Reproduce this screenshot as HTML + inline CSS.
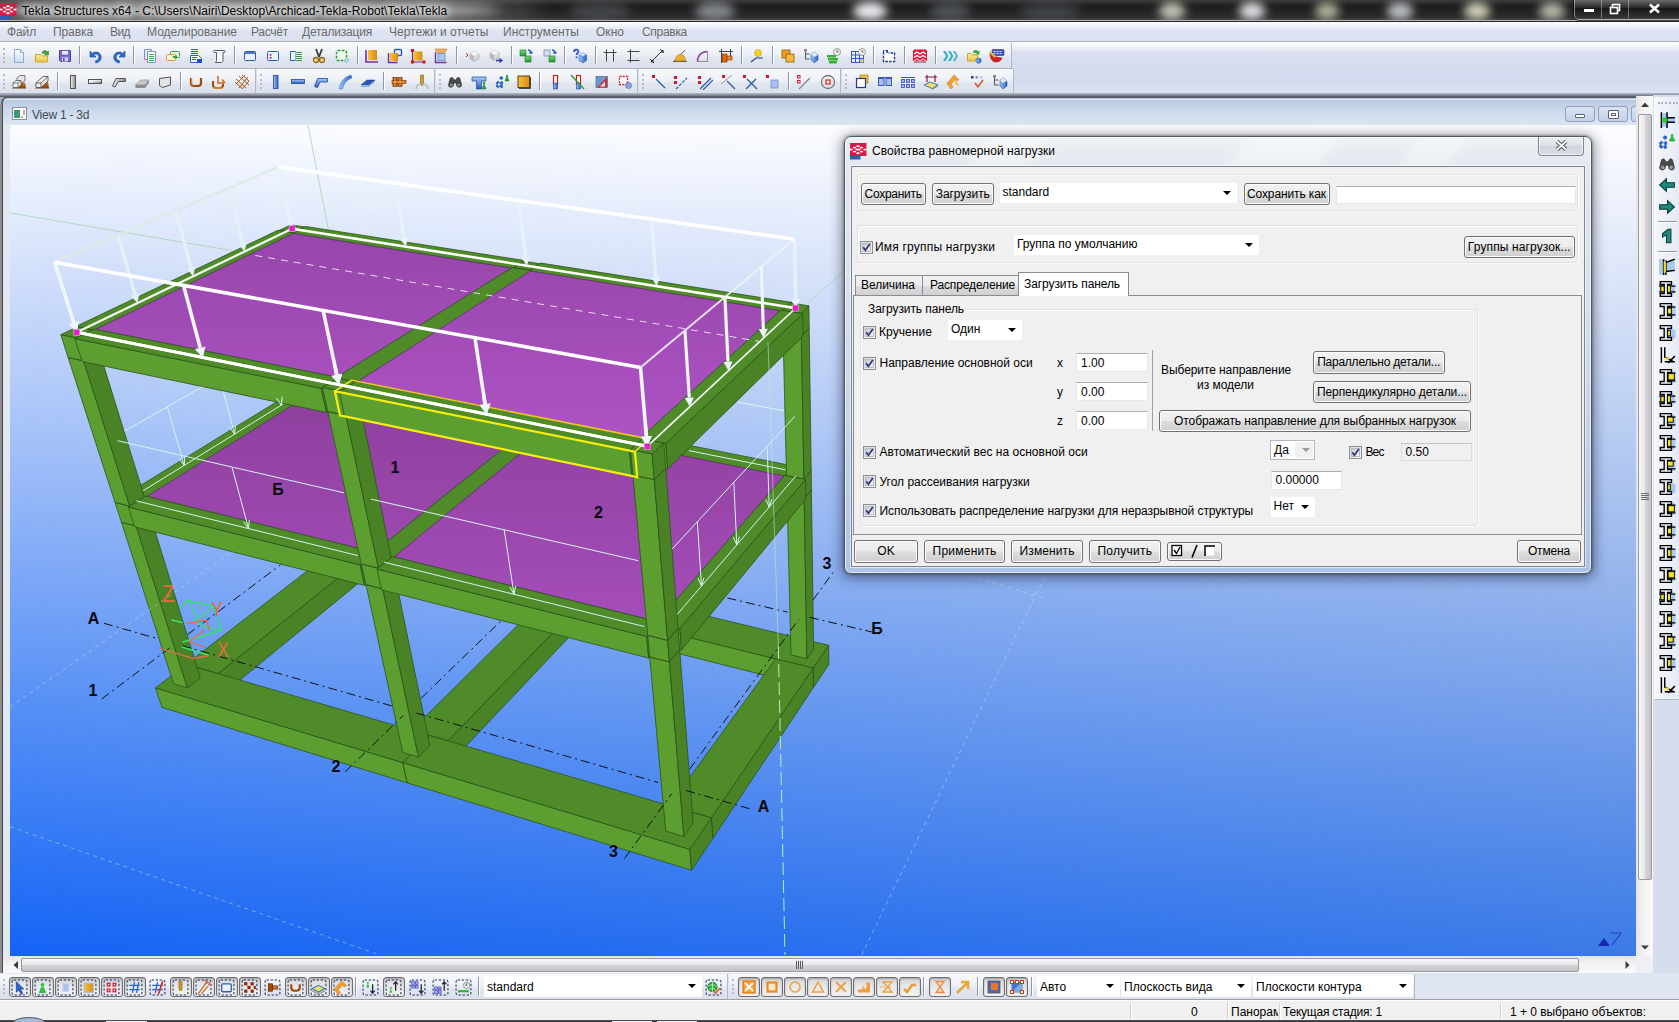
<!DOCTYPE html>
<html lang="ru"><head><meta charset="utf-8"><title>Tekla Structures</title>
<style>
html,body{margin:0;padding:0}
body{width:1679px;height:1022px;overflow:hidden;position:relative;background:#d3dcec;font-family:"Liberation Sans",sans-serif;font-size:12px;color:#000;line-height:14px}
.a{position:absolute}
.t{position:absolute;white-space:nowrap}
#title{left:0;top:0;width:1679px;height:22px;background:#262626;overflow:hidden}
#title .blob{position:absolute;border-radius:50%;filter:blur(5px)}
#menu{left:0;top:22px;width:1679px;height:19px;background:linear-gradient(#ffffff,#eff2fa 22%,#dfe4f3 45%,#dce1f1);border-bottom:1px solid #aeb2bc}
#menu span{position:absolute;top:4px;color:#6e6e6e;white-space:nowrap}
.tb{position:absolute;background:linear-gradient(#f8f9fc,#edf0f6 45%,#e0e5ef 60%,#dbe1ec);border-right:1px solid #aeb9cc;border-bottom:1px solid #b9c3d4}
.grip{position:absolute;width:2px;top:5px;bottom:5px;border-left:2px dotted #b4bccb}
.sep{position:absolute;width:1px;background:#8d97a8;box-shadow:1px 0 0 #fff}
.ic{position:absolute;width:16px;height:16px}
.btn{position:absolute;box-sizing:border-box;border:1px solid #707070;border-radius:3px;background:linear-gradient(#f2f2f2,#ebebeb 48%,#dddddd 52%,#cfcfcf);box-shadow:inset 0 0 0 1px #fcfcfc;text-align:center;white-space:nowrap;height:23px;line-height:20px;font-size:12px}
.inp{position:absolute;box-sizing:border-box;background:#fff;border:1px solid #e3e9ef;border-top-color:#abadb3;height:21px;line-height:18px;padding-left:4px;font-size:12px;white-space:nowrap}
.cmb{position:absolute;box-sizing:border-box;background:#fff;height:21px;line-height:18px;padding-left:3px;font-size:12px;white-space:nowrap}
.cmb:after{content:"";position:absolute;right:6px;top:8px;border:4px solid transparent;border-top:4px solid #000;border-bottom:0}
.cb{position:absolute;box-sizing:border-box;width:13px;height:13px;border:1px solid #8e8f8f;background:linear-gradient(135deg,#d9dadc,#f6f6f6)}
.cb:before{content:"";position:absolute;left:1px;top:1px;width:9px;height:9px;box-sizing:border-box;border:1px solid #b9bcc0;background:linear-gradient(135deg,#c8ccd2,#f4f4f5)}
.cb svg{position:absolute;left:1px;top:1px}
</style></head><body>
<svg width="0" height="0" style="position:absolute"><defs><linearGradient id="gOr" x1="0" y1="0" x2="1" y2="0"><stop offset="0" stop-color="#f6c23a"/><stop offset="1" stop-color="#d98a10"/></linearGradient><linearGradient id="gBl" x1="0" y1="0" x2="1" y2="0"><stop offset="0" stop-color="#9cc4f4"/><stop offset="1" stop-color="#2c62c8"/></linearGradient><linearGradient id="gBlv" x1="0" y1="0" x2="0" y2="1"><stop offset="0" stop-color="#a8ccf8"/><stop offset="1" stop-color="#2458c0"/></linearGradient><linearGradient id="gGy" x1="0" y1="0" x2="1" y2="0"><stop offset="0" stop-color="#f4f4f4"/><stop offset="1" stop-color="#8a8a8a"/></linearGradient><linearGradient id="gPg" x1="0" y1="0" x2="0" y2="1"><stop offset="0" stop-color="#ffffff"/><stop offset="1" stop-color="#c9daf3"/></linearGradient><linearGradient id="gYl" x1="0" y1="0" x2="0" y2="1"><stop offset="0" stop-color="#fff3a0"/><stop offset="1" stop-color="#e8c040"/></linearGradient><linearGradient id="gGn" x1="0" y1="0" x2="0" y2="1"><stop offset="0" stop-color="#7ed67e"/><stop offset="1" stop-color="#1e9a2e"/></linearGradient><linearGradient id="gBr" x1="0" y1="0" x2="0" y2="1"><stop offset="0" stop-color="#c87a28"/><stop offset="1" stop-color="#7a3c08"/></linearGradient><linearGradient id="gTeal" x1="0" y1="0" x2="0" y2="1"><stop offset="0" stop-color="#3aa89a"/><stop offset="1" stop-color="#0c5c58"/></linearGradient></defs></svg>
<div id="title" class="a">
<div class="a" style="left:0;top:0;width:1679px;height:21px;background:linear-gradient(#3c3c3c,#1d1d1d 30%,#2b2b2b 80%,#4a4a4a)"></div>
<div class="blob" style="left:-30px;top:0px;width:530px;height:20px;background:rgba(255,255,255,.6);filter:blur(6px)"></div>
<div class="blob" style="left:380px;top:1px;width:160px;height:18px;background:rgba(255,255,255,.22);filter:blur(9px)"></div>
<div class="blob" style="left:695px;top:2px;width:40px;height:18px;background:#cfd6e0;opacity:0.55"></div>
<div class="blob" style="left:853px;top:2px;width:34px;height:18px;background:#f4f6fa;opacity:0.95"></div>
<div class="blob" style="left:1159px;top:2px;width:26px;height:18px;background:#e8ecd8;opacity:0.8"></div>
<div class="blob" style="left:1239px;top:2px;width:26px;height:18px;background:#f0f2f6;opacity:0.9"></div>
<div class="blob" style="left:1315px;top:2px;width:24px;height:18px;background:#dcdcc0;opacity:0.75"></div>
<div class="blob" style="left:1387px;top:2px;width:26px;height:18px;background:#e0e4ec;opacity:0.8"></div>
<div class="blob" style="left:1464px;top:2px;width:26px;height:18px;background:#ececd0;opacity:0.85"></div>
<div class="blob" style="left:1539px;top:2px;width:26px;height:18px;background:#e0e4d0;opacity:0.75"></div>
<div class="blob" style="left:930px;top:2px;width:40px;height:18px;background:#8a93a0;opacity:0.4"></div>
<div class="blob" style="left:1020px;top:2px;width:60px;height:18px;background:#707884;opacity:0.35"></div>
<div class="blob" style="left:570px;top:2px;width:60px;height:18px;background:#70767e;opacity:0.4"></div>
<div class="a" style="left:0;top:20px;width:1679px;height:1px;background:#b4b4b6"></div><div class="a" style="left:0;top:21px;width:1679px;height:1px;background:#26262a"></div>
<svg class="a" style="left:0;top:3px" width="17" height="17" viewBox="0 0 17 17"><rect x="0" y="0" width="16.500" height="13" fill="#d81848"/><rect x="0" y="13" width="10.500" height="3.500" fill="#2c5cb4"/><g fill="#fff"><rect x="0" y="5.700" width="2.600" height="1.700"/><rect x="5.500" y="5.700" width="5" height="1.700"/><rect x="13.500" y="5.700" width="3" height="1.700"/><ellipse cx="8" cy="3.200" rx="1.800" ry="1"/><ellipse cx="4.500" cy="4.600" rx="1.600" ry=".9"/><ellipse cx="11.500" cy="4.600" rx="1.600" ry=".9"/><ellipse cx="4.500" cy="8.600" rx="1.600" ry=".9"/><ellipse cx="11.500" cy="8.600" rx="1.600" ry=".9"/><ellipse cx="8" cy="10.200" rx="1.800" ry="1"/></g></svg>
<span class="t" style="left:22px;top:4px;color:#000;letter-spacing:0.04px;text-shadow:0 0 6px #fff,0 0 10px #fff,0 0 14px #fff;">Tekla Structures x64 - C:\Users\Nairi\Desktop\Archicad-Tekla-Robot\Tekla\Tekla</span>
<div class="a" style="left:1574px;top:-3px;width:110px;height:21px;border:1px solid rgba(255,255,255,.45);border-radius:0 0 0 5px;background:linear-gradient(rgba(255,255,255,.28),rgba(255,255,255,.08) 45%,rgba(0,0,0,.25) 50%,rgba(90,90,90,.25));box-shadow:0 0 0 1px rgba(0,0,0,.6)"></div>
<div class="a" style="left:1601px;top:0;width:1px;height:18px;background:rgba(255,255,255,.35)"></div><div class="a" style="left:1628px;top:0;width:1px;height:18px;background:rgba(255,255,255,.35)"></div>
<div class="a" style="left:1584px;top:9px;width:10px;height:3px;background:#fff;box-shadow:0 0 1px #000"></div>
<svg class="a" style="left:1609px;top:3px" width="12" height="12"><rect x="3.500" y="1.500" width="7" height="6" fill="none" stroke="#fff" stroke-width="1.600"/><rect x="1.500" y="4.500" width="7" height="6" fill="#333" stroke="#fff" stroke-width="1.600"/></svg>
<svg class="a" style="left:1648px;top:3px" width="13" height="11"><path d="M2 1.500l9 8M11 1.500l-9 8" stroke="#fff" stroke-width="2.600"/></svg>
</div>
<div id="menu" class="a">
<span class="t" style="left:7px;top:3px;color:#6b6b6b;letter-spacing:-0.12px;">Файл</span>
<span class="t" style="left:53px;top:3px;color:#6b6b6b;letter-spacing:-0.09px;">Правка</span>
<span class="t" style="left:110px;top:3px;color:#6b6b6b;letter-spacing:-0.57px;">Вид</span>
<span class="t" style="left:147px;top:3px;color:#6b6b6b;letter-spacing:0.02px;">Моделирование</span>
<span class="t" style="left:251px;top:3px;color:#6b6b6b;letter-spacing:-0.26px;">Расчёт</span>
<span class="t" style="left:302px;top:3px;color:#6b6b6b;letter-spacing:-0.22px;">Детализация</span>
<span class="t" style="left:389px;top:3px;color:#6b6b6b;letter-spacing:-0.01px;">Чертежи и отчеты</span>
<span class="t" style="left:503px;top:3px;color:#6b6b6b;letter-spacing:0.11px;">Инструменты</span>
<span class="t" style="left:596px;top:3px;color:#6b6b6b;letter-spacing:0.03px;">Окно</span>
<span class="t" style="left:642px;top:3px;color:#6b6b6b;letter-spacing:-0.30px;">Справка</span>
</div>
<div class="a" style="left:0;top:42px;width:1679px;height:52px;background:linear-gradient(#f4f6fb 0,#ffffff 1px,#f2f4fb 5px,#d9dff0 11px,#d5dbee 40px,#dde2f2 100%)"></div>
<div class="tb" style="left:0px;top:43px;width:1011px;height:25px"><div class="grip" style="left:3px"></div></div>
<div class="a" style="left:0;top:68px;width:1013px;height:1px;background:#a9b3c5"></div>
<div class="tb" style="left:0px;top:69px;width:255px;height:25px"><div class="grip" style="left:3px"></div></div>
<div class="tb" style="left:257px;top:69px;width:177px;height:25px"><div class="grip" style="left:3px"></div></div>
<div class="tb" style="left:436px;top:69px;width:201px;height:25px"><div class="grip" style="left:3px"></div></div>
<div class="tb" style="left:639px;top:69px;width:201px;height:25px"><div class="grip" style="left:3px"></div></div>
<div class="tb" style="left:842px;top:69px;width:171px;height:25px"><div class="grip" style="left:3px"></div></div>
<svg class="ic" style="left:11px;top:48px" viewBox="0 0 16 16"><path d="M3.5 1.5h6l3 3v10h-9z" fill="url(#gPg)" stroke="#8fa8cf"/><path d="M9.5 1.5v3h3" fill="#e8f0fc" stroke="#8fa8cf"/></svg>
<svg class="ic" style="left:33.5px;top:48px" viewBox="0 0 16 16"><path d="M1.5 6.5h5l1 1.5h6v6h-12z" fill="url(#gYl)" stroke="#d0a830"/><path d="M8 5c1-3 4-3 5-1l1.5-1v4h-4l1.3-1.3c-1-1-2.5-.6-3 .3z" fill="#3aa83a" stroke="#1c7a1c" stroke-width=".5"/></svg>
<svg class="ic" style="left:56.5px;top:48px" viewBox="0 0 16 16"><path d="M2.5 2.5h11v11h-10l-1-1z" fill="#7b6fd0" stroke="#4a3f9e"/><rect x="4.5" y="2.5" width="7" height="4.5" fill="#ece8ff" stroke="#4a3f9e" stroke-width=".6"/><rect x="5" y="9.5" width="6" height="4" fill="#d8d4ee"/><rect x="6" y="10.3" width="1.6" height="2.6" fill="#4a3f9e"/></svg>
<div class="sep" style="left:79px;top:46px;height:18px"></div>
<svg class="ic" style="left:87.5px;top:48px" viewBox="0 0 16 16"><path d="M2 3v6h6l-2.2-2.2c2.2-1.6 5-.3 5 2.4 0 2-1.4 3.3-3.3 3.6l.3 2.2c3-.4 5.4-2.7 5.4-5.8 0-4.6-5.4-6.8-9-3.8z" fill="#2a6ad8" stroke="#1646a0" stroke-width=".6"/></svg>
<svg class="ic" style="left:111px;top:48px" viewBox="0 0 16 16"><path d="M14 3v6h-6l2.2-2.2c-2.2-1.6-5-.3-5 2.4 0 2 1.4 3.3 3.3 3.6l-.3 2.2c-3-.4-5.400-2.700-5.400-5.800 0-4.600 5.400-6.800 9-3.800z" fill="#2a6ad8" stroke="#1646a0" stroke-width=".6"/></svg>
<div class="sep" style="left:133px;top:46px;height:18px"></div>
<svg class="ic" style="left:141.5px;top:48px" viewBox="0 0 16 16"><path d="M2.500 1.500h7v10h-7z" fill="#e8eefc" stroke="#7890c0"/><path d="M5.500 3.500h8v11h-8z" fill="#fff" stroke="#7890c0"/><path d="M7 6.500h5M7 8.500h5M7 10.500h5M7 12.500h5" stroke="#22a022" stroke-width=".9"/></svg>
<svg class="ic" style="left:164.5px;top:48px" viewBox="0 0 16 16"><rect x="5.500" y="3.500" width="9" height="6" rx="1" fill="#e8f6e8" stroke="#3c9a3c"/><rect x="1.500" y="6.500" width="9" height="6" rx="1" fill="#fff4d8" stroke="#d8a030"/><path d="M11 9l3 0 0-2 2 3-2 3 0-2-3 0z" fill="#3c9a3c" transform="translate(-2,0) scale(.9)"/></svg>
<svg class="ic" style="left:187.5px;top:48px" viewBox="0 0 16 16"><path d="M3 1.500h7M3 3.500h7M3 5.500h7" stroke="#3060b0" stroke-width="1.200"/><path d="M2.500 7.500h8l3 3v4h-11z" fill="#fff" stroke="#3060b0"/><rect x="9" y="11" width="5" height="4" fill="#1c50c0"/><path d="M4 9.500h5M4 11.500h4" stroke="#3060b0"/></svg>
<svg class="ic" style="left:211px;top:48px" viewBox="0 0 16 16"><path d="M3.500 2.500h9.500c1.500 0 1.500 2 0 2h-1v8c0 1.500-1 2-2 2h-6c1 0 1.500-.8 1.500-2v-8h-2c-1.500 0-1.500-2 0-2z" fill="#f4f6fb" stroke="#56606e"/></svg>
<div class="sep" style="left:233.5px;top:46px;height:18px"></div>
<svg class="ic" style="left:241.5px;top:48px" viewBox="0 0 16 16"><rect x="2.500" y="3.500" width="11" height="9" rx="1" fill="#eaf2fd" stroke="#2a5cb8"/><path d="M2.500 5h11" stroke="#2a5cb8" stroke-width="1.600"/></svg>
<svg class="ic" style="left:265px;top:48px" viewBox="0 0 16 16"><rect x="2.500" y="3.500" width="11" height="9" rx="1" fill="#eaf2fd" stroke="#2a5cb8"/><rect x="4.500" y="6" width="2" height="1.600" fill="#c02080"/><rect x="4.500" y="9" width="2" height="1.600" fill="#c02080"/></svg>
<svg class="ic" style="left:288px;top:48px" viewBox="0 0 16 16"><path d="M2.500 3.500h5v9h-5z" fill="#eaf2fd" stroke="#2a5cb8"/><path d="M7.500 3.500h6v9h-6" fill="#f4faf4" stroke="none"/><path d="M8 4.500h6M8 6.500h6M8 8.500h6M8 10.500h6M8 12.500h6" stroke="#1e8a2e" stroke-width=".9"/></svg>
<svg class="ic" style="left:310.5px;top:48px" viewBox="0 0 16 16"><path d="M5 1l3 8M11 1l-3 8" stroke="#3a3a3a" stroke-width="1.800"/><circle cx="5" cy="12" r="2.500" fill="#f0d890" stroke="#8a6a18" stroke-width="1.300"/><circle cx="11" cy="12" r="2.500" fill="#f0d890" stroke="#8a6a18" stroke-width="1.300"/></svg>
<svg class="ic" style="left:333.5px;top:48px" viewBox="0 0 16 16"><rect x="2.500" y="2.500" width="10" height="10" rx="1.500" fill="#eaf6ea" stroke="#1e9a2e" stroke-width="1.400" stroke-dasharray="2.500 1.500"/><circle cx="12.500" cy="12.500" r="1.800" fill="#bfe0f4" stroke="#5aa0c8" stroke-width=".6"/></svg>
<div class="sep" style="left:356.5px;top:46px;height:18px"></div>
<svg class="ic" style="left:363.5px;top:48px" viewBox="0 0 16 16"><path d="M2 2v12h12" fill="none" stroke="#7a2aa0" stroke-width="1.600"/><rect x="4" y="2" width="9" height="10" fill="url(#gOr)"/></svg>
<svg class="ic" style="left:387px;top:48px" viewBox="0 0 16 16"><rect x="7.500" y="1.500" width="7" height="6" rx="1" fill="#eaf2fd" stroke="#2a5cb8" stroke-width="1.400"/><path d="M1.500 5v9.500h9" fill="none" stroke="#7a2aa0" stroke-width="1.400"/><rect x="3" y="5" width="8" height="8" fill="url(#gOr)"/></svg>
<svg class="ic" style="left:410px;top:48px" viewBox="0 0 16 16"><rect x="3.500" y="3.500" width="9" height="9" fill="url(#gOr)"/><path d="M2.500 2v12h12" fill="none" stroke="#7a2aa0" stroke-width="1.200"/><rect x="1" y="1" width="3" height="3" fill="#d01818"/><rect x="1" y="12.500" width="3" height="3" fill="#d01818"/><rect x="12.500" y="12.500" width="3" height="3" fill="#d01818"/></svg>
<svg class="ic" style="left:433px;top:48px" viewBox="0 0 16 16"><path d="M2 1h12l-2.500 4h-7z" fill="#f0b060" stroke="#c88020" stroke-width=".6"/><path d="M2.500 4v10.500h11" fill="none" stroke="#7a2aa0" stroke-width="1.400"/><rect x="5" y="5.500" width="7" height="7" fill="#a8c8f0" stroke="#6a8ab8" stroke-width=".8"/></svg>
<div class="sep" style="left:456px;top:46px;height:18px"></div>
<svg class="ic" style="left:464.5px;top:48px" viewBox="0 0 16 16"><path d="M1 5l2 2-2 2" fill="none" stroke="#c02020" stroke-width="1"/><path d="M9 3l5 2.500v5l-5 3-4-3v-5z" fill="#d8d8d8" stroke="#9a9a9a" stroke-width=".5"/><path d="M9 3l5 2.500-5 2.500-4-2.500z" fill="#f4f4f4"/><path d="M9 8v5.500l-4-3v-5z" fill="#b8b8b8"/></svg>
<svg class="ic" style="left:487.5px;top:48px" viewBox="0 0 16 16"><path d="M6 2l5 2.500v5l-5 3-4-3v-5z" fill="#d8d8d8" stroke="#9a9a9a" stroke-width=".5"/><path d="M6 2l5 2.500-5 2.500-4-2.500z" fill="#f4f4f4"/><path d="M6 7v5.500l-4-3v-5z" fill="#b8b8b8"/><path d="M8 12.500h5.500M11.500 10.500l2.500 2-2.500 2" fill="none" stroke="#3838b0" stroke-width="1.300"/></svg>
<div class="sep" style="left:510.5px;top:46px;height:18px"></div>
<svg class="ic" style="left:518px;top:48px" viewBox="0 0 16 16"><rect x="2" y="2" width="6" height="6" fill="url(#gGn)" stroke="#1a7a26" stroke-width=".6"/><rect x="7" y="8" width="6" height="6" fill="url(#gGn)" stroke="#1a7a26" stroke-width=".6"/><path d="M10 2c2 0 3 1 3 3M11.500 4l1.500 1.500 1.500-1.500" fill="none" stroke="#2a5cd0" stroke-width="1.300"/></svg>
<svg class="ic" style="left:541.5px;top:48px" viewBox="0 0 16 16"><rect x="2" y="2" width="6" height="6" fill="#d8dcf0" stroke="#8088b8" stroke-width=".8"/><rect x="7" y="8" width="6" height="6" fill="url(#gGn)" stroke="#1a7a26" stroke-width=".6"/><path d="M10 2c2 0 3 1 3 3M11.500 4l1.500 1.500 1.500-1.500" fill="none" stroke="#2a5cd0" stroke-width="1.300"/></svg>
<div class="sep" style="left:564px;top:46px;height:18px"></div>
<svg class="ic" style="left:572px;top:48px" viewBox="0 0 16 16"><path d="M2 4c0-3 4.500-3 4.500-.5 0 1.500-2 1.500-2 3.500" fill="none" stroke="#2a50c8" stroke-width="1.700"/><rect x="3.700" y="8.500" width="1.700" height="1.700" fill="#2a50c8"/><path d="M7 6.500l4-1.500 3.500 1.500v6l-3.500 2.500-4-2.500z" fill="url(#gBl)" stroke="#2050b0" stroke-width=".5"/><path d="M7 6.500l4-1.500 3.500 1.500-3.500 1.500z" fill="#d8e8fc"/></svg>
<div class="sep" style="left:595px;top:46px;height:18px"></div>
<svg class="ic" style="left:602px;top:48px" viewBox="0 0 16 16"><path d="M1.500 4.500h13M4.500 1.500v12M11.500 1.500v12" fill="none" stroke="#444" stroke-width="1"/></svg>
<svg class="ic" style="left:625.5px;top:48px" viewBox="0 0 16 16"><path d="M4.500 1.500v13M1.500 3.500h12M1.500 12.500h12" fill="none" stroke="#444" stroke-width="1"/></svg>
<svg class="ic" style="left:648.5px;top:48px" viewBox="0 0 16 16"><path d="M3 13L13 3" stroke="#333" stroke-width="1"/><path d="M1 11l4 4M11 1l4 4" stroke="#333" stroke-width="1"/><rect x="2" y="12" width="2.500" height="2.500" fill="#333"/><rect x="12" y="2" width="2.500" height="2.500" fill="#333"/></svg>
<svg class="ic" style="left:671.5px;top:48px" viewBox="0 0 16 16"><path d="M1 13.500h14" stroke="#555" stroke-width="1"/><path d="M2 13.500L13 2" stroke="#555" stroke-width="1"/><path d="M3 13c0-4 3-6.500 5.500-6.500s5 2 5 6.500z" fill="#e8b030" stroke="#b07a10" stroke-width=".6"/></svg>
<svg class="ic" style="left:695px;top:48px" viewBox="0 0 16 16"><path d="M2.500 13.500c0-6 4-10 10-10" fill="none" stroke="#8a3aa0" stroke-width="1.500"/><path d="M12.500 3.500v10h-10" fill="none" stroke="#777" stroke-width=".8"/></svg>
<svg class="ic" style="left:718px;top:48px" viewBox="0 0 16 16"><path d="M1 3.500h14M3.500 1v14M12.500 1v8" fill="none" stroke="#444" stroke-width="1"/><rect x="4" y="6" width="5" height="8" fill="#d86a10" stroke="#7a3000" stroke-width=".6"/><rect x="9" y="8" width="5" height="4" fill="#e88a20" stroke="#7a3000" stroke-width=".6"/></svg>
<div class="sep" style="left:741px;top:46px;height:18px"></div>
<svg class="ic" style="left:749px;top:48px" viewBox="0 0 16 16"><path d="M2 14l5-4h7" fill="none" stroke="#2a3ab0" stroke-width="1.200"/><circle cx="9" cy="5" r="3.500" fill="#f4d428" stroke="#c8a010" stroke-width=".6"/><path d="M9 8.500v2" stroke="#888" stroke-width="1"/></svg>
<div class="sep" style="left:772px;top:46px;height:18px"></div>
<svg class="ic" style="left:779.5px;top:48px" viewBox="0 0 16 16"><rect x="2" y="2" width="8" height="8" fill="#f0a020" stroke="#8a5a10" stroke-width=".8"/><rect x="6" y="6" width="8" height="8" fill="#f8b838" stroke="#8a5a10" stroke-width=".8"/></svg>
<svg class="ic" style="left:803px;top:48px" viewBox="0 0 16 16"><path d="M2.500 2v9h4M2.500 6h4" fill="none" stroke="#555" stroke-width="1"/><rect x="1" y="1" width="3" height="2.500" fill="#888"/><path d="M8 6l4-2 3 3v5l-4 3-3-3z" fill="url(#gBl)" stroke="#1c48a8" stroke-width=".5"/><path d="M8 6l4-2 3 3-4 2z" fill="#e0ecfc"/></svg>
<svg class="ic" style="left:825.5px;top:48px" viewBox="0 0 16 16"><rect x="1" y="7" width="9" height="2.500" fill="#38b038"/><rect x="2" y="10" width="10" height="2.500" fill="#38b038"/><rect x="3" y="13" width="8" height="2.500" fill="#38b038"/><circle cx="11" cy="4" r="3.500" fill="#f0f0f0" stroke="#888" stroke-width=".8"/><path d="M11 2v2h1.500" fill="none" stroke="#444" stroke-width=".8"/></svg>
<svg class="ic" style="left:850px;top:48px" viewBox="0 0 16 16"><rect x="1.500" y="3.500" width="12" height="11" fill="#e8eefc" stroke="#3858b8"/><path d="M1.500 7h12M1.500 10.500h12M5.500 3.500v11M9.500 3.500v11" stroke="#3858b8" stroke-width="1"/><rect x="10" y="11" width="3.500" height="3.500" fill="#d8d838"/><circle cx="12" cy="4" r="3.500" fill="#f4f4f4" stroke="#888" stroke-width=".8"/><path d="M12 2v2h1.500" fill="none" stroke="#444" stroke-width=".8"/></svg>
<div class="sep" style="left:873px;top:46px;height:18px"></div>
<svg class="ic" style="left:880.5px;top:48px" viewBox="0 0 16 16"><path d="M2 2h5v3H2z" fill="#1a4ab8"/><path d="M2.500 4v9.500h11v-8.500h-6" fill="#fff" stroke="#1a3a88" stroke-width="1.400" stroke-dasharray="2.500 1.300"/><rect x="3" y="2.500" width="2" height="2" fill="#fff"/></svg>
<div class="sep" style="left:903.5px;top:46px;height:18px"></div>
<svg class="ic" style="left:912px;top:48px" viewBox="0 0 16 16"><rect x="1" y="1.500" width="14" height="12" rx="1.500" fill="#d81838"/><path d="M2 6l3-2 3 2 3-2 3 2M2 9.500l3-2 3 2 3-2 3 2" fill="none" stroke="#fff" stroke-width="1.400"/><path d="M2 13l3-2 3 2 3-2 3 2" fill="none" stroke="#f8b0c0" stroke-width="1.200"/><rect x="2" y="13.500" width="12" height="1.500" fill="#999"/></svg>
<div class="sep" style="left:935px;top:46px;height:18px"></div>
<svg class="ic" style="left:942px;top:48px" viewBox="0 0 16 16"><path d="M1 3h2.500l3 5-3 5h-2.500l3-5zM6 3h2.500l3 5-3 5h-2.500l3-5zM11 3h2l3 5-3 5h-2l3-5z" fill="#3ab0c8"/></svg>
<svg class="ic" style="left:965.5px;top:48px" viewBox="0 0 16 16"><path d="M1.500 5.500h4l1 1.500h5v6h-10z" fill="url(#gYl)" stroke="#d0a830"/><path d="M7 4c1-2.500 4-2.500 5-.5l1.500-1v4h-4l1.300-1.300c-1-1-2.200-.5-2.800.3z" fill="#3aa83a"/><path d="M10 11l2.500-1 2.500 1v3l-2.500 1.500-2.500-1.500z" fill="url(#gBl)" stroke="#1c48a8" stroke-width=".5"/></svg>
<svg class="ic" style="left:988.5px;top:48px" viewBox="0 0 16 16"><rect x="3" y="1.500" width="12" height="6" rx="1" fill="#4858c8" stroke="#283088" stroke-width=".6"/><path d="M4.500 3.500h9M4.500 5.500h9" stroke="#c8d0f8" stroke-width="1.200" stroke-dasharray="2 1"/><path d="M1 5c2 0 4 3 6 4l6 1c-1 3-4 4.500-7 4-3-.5-5-4-5-9z" fill="#d82020" stroke="#8a1010" stroke-width=".5"/><path d="M1 4l5 5" stroke="#f0c020" stroke-width="2"/></svg>
<svg class="ic" style="left:11px;top:74px" viewBox="0 0 16 16"><path d="M1 14.500h14l-1-6h-3z" fill="url(#gBr)"/><path d="M6 4l3-2.500h5v5l-3 2.500h-5z" fill="#e8e8e8" stroke="#555" stroke-width=".8"/><path d="M2 9l3-2.500h5v4.500l-3 2.500h-5z" fill="#f4f4f4" stroke="#555" stroke-width=".8"/><path d="M2 9h5v4.500M7 9l3-2.500" fill="none" stroke="#555" stroke-width=".8"/></svg>
<svg class="ic" style="left:33.5px;top:74px" viewBox="0 0 16 16"><path d="M1 14.500h14l-1-7h-3z" fill="url(#gBr)"/><path d="M2 9l7-6.500h5v4.500l-7 6.500h-5z" fill="#f0f0f0" stroke="#555" stroke-width=".9"/><path d="M2 9h5v4.500M7 9l7-6.500" fill="none" stroke="#555" stroke-width=".9"/></svg>
<div class="sep" style="left:56.5px;top:72px;height:18px"></div>
<svg class="ic" style="left:64.5px;top:74px" viewBox="0 0 16 16"><rect x="5.500" y="1.500" width="5" height="13" fill="url(#gGy)" stroke="#555" stroke-width="1"/></svg>
<svg class="ic" style="left:87px;top:74px" viewBox="0 0 16 16"><rect x="1.500" y="5.500" width="13" height="4" fill="url(#gGy)" stroke="#555" stroke-width="1"/><rect x="2" y="6" width="12" height="1.500" fill="#fff" opacity=".7"/></svg>
<svg class="ic" style="left:110.5px;top:74px" viewBox="0 0 16 16"><path d="M1.500 12l3.500-7.500h9.500v3h-7.500l-3 5.500z" fill="url(#gGy)" stroke="#555" stroke-width="1"/></svg>
<svg class="ic" style="left:134px;top:74px" viewBox="0 0 16 16"><path d="M1.500 11l5-5h8.500l-4 5z" fill="#c8c8c8" stroke="#8a8a8a" stroke-width=".6"/><path d="M1.500 11h9.500l4-5v3l-4 5h-9.500z" fill="#8e8e8e"/></svg>
<svg class="ic" style="left:157px;top:74px" viewBox="0 0 16 16"><path d="M2.500 4.500l11-1.500v8l-8 2.500-3-2z" fill="#e4e4e4" stroke="#555" stroke-width="1"/></svg>
<div class="sep" style="left:179.5px;top:72px;height:18px"></div>
<svg class="ic" style="left:187.5px;top:74px" viewBox="0 0 16 16"><path d="M3 4v5c0 2 1 3 3 3h4c2 0 3-1 3-3v-5" fill="none" stroke="#a04808" stroke-width="2.200"/><path d="M3.500 4v5c0 1.500 1 2.500 2.500 2.500" fill="none" stroke="#f0a050" stroke-width=".7"/></svg>
<svg class="ic" style="left:210.5px;top:74px" viewBox="0 0 16 16"><path d="M2 7v4c0 2 1 3 3 3h4c2 0 3-1 3-3v-1" fill="none" stroke="#a04808" stroke-width="2"/><path d="M7 2v7h6M11 5.500l3 3.500" fill="none" stroke="#c86818" stroke-width="1.500"/><path d="M2 14h10" stroke="#e8c020" stroke-width="1"/></svg>
<svg class="ic" style="left:234px;top:74px" viewBox="0 0 16 16"><path d="M2 5l10 9M5 2l10 9M8 1l7 6M1 8l8 7M5 14L14 3M2 10l9-9M8 15l7-8" fill="none" stroke="#b05818" stroke-width="1"/></svg>
<svg class="ic" style="left:267.5px;top:74px" viewBox="0 0 16 16"><rect x="5.500" y="1.500" width="4.500" height="13" fill="url(#gBl)" stroke="#1c48a8" stroke-width=".8"/></svg>
<svg class="ic" style="left:290px;top:74px" viewBox="0 0 16 16"><rect x="1.500" y="5.500" width="13" height="4" fill="url(#gBlv)" stroke="#1c48a8" stroke-width=".8"/></svg>
<svg class="ic" style="left:313px;top:74px" viewBox="0 0 16 16"><path d="M1.500 12.500l3-8h10v3.500h-7.500l-2.500 5.500z" fill="url(#gBlv)" stroke="#1c48a8" stroke-width=".8"/></svg>
<svg class="ic" style="left:336.5px;top:74px" viewBox="0 0 16 16"><path d="M2 15c1-7 5-12 12-14l1 3c-5 2-8 5-9.500 11z" fill="url(#gBl)" stroke="#3a78d0" stroke-width=".5"/></svg>
<svg class="ic" style="left:359.5px;top:74px" viewBox="0 0 16 16"><path d="M1 11l6-5h8l-6 5z" fill="#2858b8" stroke="#183888" stroke-width=".5"/><path d="M1 12.500h8l6-5" fill="none" stroke="#88a8d8" stroke-width="1"/></svg>
<div class="sep" style="left:382.5px;top:72px;height:18px"></div>
<svg class="ic" style="left:390.5px;top:74px" viewBox="0 0 16 16"><rect x="2" y="3.500" width="4" height="9" fill="#c85808" stroke="#6a2800" stroke-width=".7"/><rect x="7" y="3.500" width="4" height="9" fill="#c85808" stroke="#6a2800" stroke-width=".7"/><rect x="1" y="6.500" width="14" height="3" fill="#e88820" stroke="#6a2800" stroke-width=".6"/><path d="M4 3.500v9M9 3.500v9" stroke="#f8c070" stroke-width=".8"/></svg>
<svg class="ic" style="left:413.5px;top:74px" viewBox="0 0 16 16"><path d="M6.500 1h3v8l-1.500 3-1.500-3z" fill="#c89828" stroke="#8a6410" stroke-width=".6"/><path d="M2 15c0-3 2-5 6-5s6 2 6 5" fill="none" stroke="#aaa" stroke-width="1.200"/></svg>
<svg class="ic" style="left:447px;top:74px" viewBox="0 0 16 16"><path d="M3 5c0-2 3-2 3.500 0l1 1h1l1-1c.5-2 3.500-2 3.500 0l1.500 6c0 3-4.500 3-5 0v-2h-3v2c-.5 3-5 3-5 0z" fill="#4a4a4a" stroke="#222" stroke-width=".6"/><circle cx="4.200" cy="11" r="1.600" fill="#8a8a8a"/><circle cx="11.800" cy="11" r="1.600" fill="#8a8a8a"/></svg>
<svg class="ic" style="left:470.5px;top:74px" viewBox="0 0 16 16"><path d="M1 3h14v4h-4.500v8h-5v-8h-4.500z" fill="url(#gBlv)" stroke="#1c48a8" stroke-width=".7"/><path d="M11 15l2-5 2 5z" fill="#28a838" stroke="#0c6c1c" stroke-width=".5"/><circle cx="13" cy="9" r="1.300" fill="#28a838"/></svg>
<svg class="ic" style="left:493.5px;top:74px" viewBox="0 0 16 16"><path d="M2 9l2-2 2 2 2-2 1 2-1 2 1 2-2 1-1-2-2 2-2-2 1-2z" fill="#2a68d0" stroke="#1848a0" stroke-width=".5"/><path d="M5 4l2-2 2 1v2l-2 1z" fill="#2a68d0"/><path d="M11 7l2-5 2 5z" fill="#28a838" stroke="#0c6c1c" stroke-width=".5"/><circle cx="13" cy="2" r="1.200" fill="#28a838"/><circle cx="5" cy="10.500" r="1.300" fill="#e8f0fc"/></svg>
<svg class="ic" style="left:516px;top:74px" viewBox="0 0 16 16"><rect x="2" y="2" width="11.500" height="11.500" fill="url(#gOr)" stroke="#5a4010" stroke-width="1"/><path d="M3 14.500h11.500v-11.500" fill="none" stroke="#444" stroke-width="1"/></svg>
<div class="sep" style="left:539px;top:72px;height:18px"></div>
<svg class="ic" style="left:548px;top:74px" viewBox="0 0 16 16"><rect x="5.500" y="1.500" width="4" height="9" fill="#fff" stroke="#c82020" stroke-width="1.200"/><rect x="5.500" y="9" width="4" height="6" fill="url(#gBl)" stroke="#1c48a8" stroke-width=".6"/></svg>
<svg class="ic" style="left:570px;top:74px" viewBox="0 0 16 16"><rect x="6.500" y="1.500" width="4" height="9" fill="#fff" stroke="#c82020" stroke-width="1.200"/><rect x="6.500" y="9" width="4" height="6" fill="url(#gBl)" stroke="#1c48a8" stroke-width=".6"/><path d="M1 1l13 14" stroke="#3a9a3a" stroke-width="1.500"/></svg>
<svg class="ic" style="left:593.5px;top:74px" viewBox="0 0 16 16"><rect x="2" y="2.500" width="11.500" height="11" fill="#6898d8" stroke="#555" stroke-width=".6"/><path d="M3 13.500l10-10.500v10.500z" fill="#c83048"/><path d="M6 12.500l5-5v5z" fill="#f0e0e0"/></svg>
<svg class="ic" style="left:616.5px;top:74px" viewBox="0 0 16 16"><rect x="2.500" y="2.500" width="8" height="8" fill="#fff" stroke="#c82020" stroke-width="1.300" stroke-dasharray="2 1.200"/><circle cx="11.500" cy="11.500" r="3" fill="#8aa8e0" stroke="#4a68b0" stroke-width=".6"/></svg>
<svg class="ic" style="left:650.5px;top:74px" viewBox="0 0 16 16"><rect x="1" y="1" width="3" height="3" fill="#d01830"/><path d="M5 5l9 9" stroke="#2a58b0" stroke-width="1.300"/></svg>
<svg class="ic" style="left:673px;top:74px" viewBox="0 0 16 16"><rect x="1" y="2" width="3" height="3" fill="#d01830"/><rect x="1" y="7" width="3" height="3" fill="#d01830"/><path d="M3 15L14 4" stroke="#2a58b0" stroke-width="1.200" stroke-dasharray="3 1.500"/></svg>
<svg class="ic" style="left:696.5px;top:74px" viewBox="0 0 16 16"><rect x="1" y="2" width="3" height="3" fill="#d01830"/><rect x="1" y="7" width="3" height="3" fill="#d01830"/><path d="M3 15L14 4M6 16L16 6" stroke="#2a58b0" stroke-width="1.200"/></svg>
<svg class="ic" style="left:719.5px;top:74px" viewBox="0 0 16 16"><rect x="2" y="1" width="3" height="3" fill="#d01830"/><path d="M7 7l8 8" stroke="#2a58b0" stroke-width="1.300"/><path d="M1 10L12 1" stroke="#999" stroke-width="1"/></svg>
<svg class="ic" style="left:742px;top:74px" viewBox="0 0 16 16"><rect x="1" y="1" width="3" height="3" fill="#d01830"/><path d="M5 5l10 10M4 15L14 5" stroke="#2a58b0" stroke-width="1.300"/></svg>
<svg class="ic" style="left:765px;top:74px" viewBox="0 0 16 16"><rect x="1" y="1" width="3" height="3" fill="#d01830"/><rect x="6" y="6" width="7" height="8" fill="#a8c0f0" stroke="#6a88c8" stroke-width=".7"/></svg>
<div class="sep" style="left:788px;top:72px;height:18px"></div>
<svg class="ic" style="left:795.5px;top:74px" viewBox="0 0 16 16"><rect x="1.500" y="1.500" width="2.500" height="2.500" fill="#fff" stroke="#d01830"/><rect x="1.500" y="6.500" width="2.500" height="2.500" fill="#fff" stroke="#d01830"/><path d="M3 15L14 4" stroke="#888" stroke-width="1.300"/></svg>
<svg class="ic" style="left:819.5px;top:74px" viewBox="0 0 16 16"><circle cx="8" cy="8" r="6.500" fill="none" stroke="#777" stroke-width="1.300"/><rect x="6" y="6" width="4" height="4" fill="#fff" stroke="#e02818" stroke-width="1.300"/></svg>
<svg class="ic" style="left:853.5px;top:74px" viewBox="0 0 16 16"><rect x="6" y="1" width="8" height="8" fill="#f0c040" stroke="#8a6a10" stroke-width=".6"/><rect x="2.500" y="4.500" width="9" height="9" fill="#fff" stroke="#283890" stroke-width="1.200"/></svg>
<svg class="ic" style="left:877px;top:74px" viewBox="0 0 16 16"><rect x="1.500" y="4.500" width="5.500" height="7" fill="#a8c0f0" stroke="#3858b8" stroke-width="1"/><rect x="9" y="4.500" width="5.500" height="7" fill="#a8c0f0" stroke="#3858b8" stroke-width="1"/><path d="M1 3.500h14" stroke="#3858b8" stroke-width="1"/></svg>
<svg class="ic" style="left:900px;top:74px" viewBox="0 0 16 16"><path d="M1 3.500h14" stroke="#3858b8" stroke-width="1"/><g fill="#a8b8f0" stroke="#3848b0" stroke-width=".8"><rect x="1.500" y="5.500" width="3" height="3"/><rect x="6.500" y="5.500" width="3" height="3"/><rect x="11.500" y="5.500" width="3" height="3"/><rect x="1.500" y="10.500" width="3" height="3"/><rect x="6.500" y="10.500" width="3" height="3"/><rect x="11.500" y="10.500" width="3" height="3"/></g></svg>
<svg class="ic" style="left:923px;top:74px" viewBox="0 0 16 16"><path d="M2 3h12M4 1v7M12 1v7" stroke="#8a1838" stroke-width="1.200" fill="none"/><path d="M1 11l6-3 8 3-6 3.500z" fill="#f0e060" stroke="#3878c0" stroke-width="1"/><path d="M9 15.500l6-3.500" stroke="#888" stroke-width="1"/></svg>
<svg class="ic" style="left:946px;top:74px" viewBox="0 0 16 16"><path d="M8 1l5 4.500-2 1.500-2-1.500-4 4.500 2 3-2 2-4-5.500z" fill="#f0a030" stroke="#c87810" stroke-width=".5"/><path d="M9 5.500l4 5-1.500 1.500-4-4.500z" fill="#f8c060"/></svg>
<svg class="ic" style="left:969px;top:74px" viewBox="0 0 16 16"><rect x="2" y="2" width="2.500" height="2.500" fill="#283890"/><rect x="6.500" y="2" width="2.500" height="2.500" fill="#8090c8"/><rect x="11" y="2" width="2.500" height="2.500" fill="#c0c8e8"/><path d="M6 9l3 4 5-7" fill="none" stroke="#d84010" stroke-width="1.300"/></svg>
<svg class="ic" style="left:992px;top:74px" viewBox="0 0 16 16"><path d="M2.500 2v9h4M2.500 6h4" fill="none" stroke="#555" stroke-width="1"/><rect x="1" y="1" width="3" height="2.500" fill="#888"/><path d="M8 6l4-2 3 3v5l-4 3-3-3z" fill="url(#gBl)" stroke="#1c48a8" stroke-width=".5"/><path d="M8 6l4-2 3 3-4 2z" fill="#e0ecfc"/></svg>
<div class="a" style="left:0;top:93px;width:1679px;height:2px;background:linear-gradient(#b4b9c6,#8d93a0)"></div>
<div class="a" style="left:0;top:95px;width:1654px;height:878px;background:#a8b4c8"></div>
<div class="a" style="left:0;top:95px;width:1654px;height:2px;background:linear-gradient(#8a919e,#4f545e)"></div>
<div class="a" style="left:1px;top:96px;width:1700px;height:900px;border:2px solid #5a5f68;border-radius:7px 0 0 0;background:linear-gradient(#b4c5de,#cbd8eb 12px,#dfe7f3 29px,#dfe7f3)"></div>
<div class="a" style="left:4px;top:99px;width:1640px;height:1px;background:rgba(255,255,255,.55)"></div>
<div class="a" style="left:3px;top:125px;width:7px;height:832px;background:#e3e9f3"></div>
<svg class="a" style="left:12px;top:107px" width="15" height="13"><rect x=".5" y=".5" width="14" height="12" fill="#fdfdfd" stroke="#8a9098"/><rect x="2" y="3" width="6" height="8" fill="#3a9878"/><path d="M9 10h2M12 3v5" stroke="#c04040" stroke-width="1"/></svg>
<span class="t" style="left:32px;top:108px;color:#3f4a57;letter-spacing:-0.25px;">View 1 - 3d</span>
<div class="a" style="left:1565px;top:106px;width:30px;height:16px;box-sizing:border-box;border:1px solid #8ea0bd;border-radius:3px;background:linear-gradient(#d8e2f1,#c4d2e8)"></div>
<div class="a" style="left:1598px;top:106px;width:30px;height:16px;box-sizing:border-box;border:1px solid #8ea0bd;border-radius:3px;background:linear-gradient(#d8e2f1,#c4d2e8)"></div>
<div class="a" style="left:1631px;top:106px;width:30px;height:16px;box-sizing:border-box;border:1px solid #8ea0bd;border-radius:3px;background:linear-gradient(#d8e2f1,#c4d2e8)"></div>
<div class="a" style="left:1575px;top:114px;width:10px;height:4px;box-sizing:border-box;border:1px solid #596273;background:#fff;border-radius:1px"></div>
<div class="a" style="left:1608px;top:110px;width:11px;height:9px;box-sizing:border-box;border:1.500px solid #596273;background:#fff;border-radius:1px"></div><div class="a" style="left:1611px;top:113px;width:5px;height:3px;box-sizing:border-box;border:1px solid #596273"></div>
<div class="a" id="view" style="left:10px;top:125px;width:1626px;height:831px;overflow:hidden">
<svg width="1626" height="831" viewBox="10 125 1626 831" style="position:absolute;left:0;top:0;font-family:'Liberation Sans',sans-serif">
<defs><linearGradient id="bgL" x1="0" y1="0" x2="0" y2="1"><stop offset="0" stop-color="#fbfcff"/><stop offset=".2" stop-color="#cddcfa"/><stop offset=".45" stop-color="#93b6f8"/><stop offset=".7" stop-color="#5690f6"/><stop offset="1" stop-color="#1564f6"/></linearGradient><linearGradient id="bgR" x1="0" y1="0" x2="0" y2="1"><stop offset="0" stop-color="#fdfdff"/><stop offset=".2" stop-color="#d9e3f8"/><stop offset=".55" stop-color="#96b4ec"/><stop offset="1" stop-color="#3b7ae6"/></linearGradient><linearGradient id="mH" x1="0" y1="0" x2="1" y2="0"><stop offset="0" stop-color="#fff" stop-opacity="0"/><stop offset="1" stop-color="#fff" stop-opacity="1"/></linearGradient><mask id="mk" maskUnits="userSpaceOnUse" x="10" y="125" width="1626" height="831"><rect x="10" y="125" width="1626" height="831" fill="url(#mH)"/></mask><linearGradient id="mgT" gradientUnits="userSpaceOnUse" x1="0" y1="230" x2="0" y2="445"><stop offset="0" stop-color="#9746aa"/><stop offset="1" stop-color="#ae53c5"/></linearGradient><linearGradient id="mg2" gradientUnits="userSpaceOnUse" x1="0" y1="400" x2="0" y2="640"><stop offset="0" stop-color="#8e409e"/><stop offset="1" stop-color="#a74ebc"/></linearGradient></defs>
<rect x="10" y="125" width="1626" height="831" fill="url(#bgL)"/>
<rect x="10" y="125" width="1626" height="831" fill="url(#bgR)" mask="url(#mk)"/>
<polygon points="338.8,567.9 561.1,623.9 558.6,605.2 334.6,549.8" fill="#5c9e30" stroke="#2a5518" stroke-width="0.8" stroke-linejoin="round"/>
<polygon points="561.1,623.9 580.7,603.6 578.5,585.0 558.6,605.2" fill="#4a8326" stroke="#2a5518" stroke-width="0.8" stroke-linejoin="round"/>
<polygon points="334.6,549.8 558.6,605.2 578.5,585.0 357.8,531.9" fill="#508b29" stroke="#2a5518" stroke-width="0.8" stroke-linejoin="round"/>
<polygon points="561.1,623.9 813.4,687.6 813.2,668.1 558.6,605.2" fill="#5c9e30" stroke="#2a5518" stroke-width="0.8" stroke-linejoin="round"/>
<polygon points="813.4,687.6 828.9,664.5 828.7,645.3 813.2,668.1" fill="#4a8326" stroke="#2a5518" stroke-width="0.8" stroke-linejoin="round"/>
<polygon points="558.6,605.2 813.2,668.1 828.7,645.3 578.5,585.0" fill="#508b29" stroke="#2a5518" stroke-width="0.8" stroke-linejoin="round"/>
<polygon points="192.2,683.6 224.0,693.0 218.1,673.6 186.1,664.3" fill="#5c9e30" stroke="#2a5518" stroke-width="0.8" stroke-linejoin="round"/>
<polygon points="224.0,693.0 368.2,575.3 364.2,557.1 218.1,673.6" fill="#4a8326" stroke="#2a5518" stroke-width="0.8" stroke-linejoin="round"/>
<polygon points="186.1,664.3 218.1,673.6 364.2,557.1 334.6,549.8" fill="#508b29" stroke="#2a5518" stroke-width="0.8" stroke-linejoin="round"/>
<polygon points="349.7,546.6 362.3,549.7 330.0,401.3 316.7,398.6" fill="#5c9e30" stroke="#2a5518" stroke-width="0.8" stroke-linejoin="round"/>
<polygon points="362.3,549.7 372.1,542.0 340.7,394.4 330.0,401.3" fill="#4a8326" stroke="#2a5518" stroke-width="0.8" stroke-linejoin="round"/>
<polygon points="316.7,398.6 330.0,401.3 340.7,394.4 327.4,391.8" fill="#508b29" stroke="#2a5518" stroke-width="0.8" stroke-linejoin="round"/>
<polygon points="415.8,750.1 451.9,760.9 448.0,740.8 411.5,730.2" fill="#5c9e30" stroke="#2a5518" stroke-width="0.8" stroke-linejoin="round"/>
<polygon points="451.9,760.9 577.6,628.1 575.3,609.3 448.0,740.8" fill="#4a8326" stroke="#2a5518" stroke-width="0.8" stroke-linejoin="round"/>
<polygon points="411.5,730.2 448.0,740.8 575.3,609.3 542.0,601.1" fill="#508b29" stroke="#2a5518" stroke-width="0.8" stroke-linejoin="round"/>
<polygon points="671.3,826.2 712.8,838.5 711.4,817.9 669.4,805.6" fill="#5c9e30" stroke="#2a5518" stroke-width="0.8" stroke-linejoin="round"/>
<polygon points="712.8,838.5 813.4,687.6 813.2,668.1 711.4,817.9" fill="#4a8326" stroke="#2a5518" stroke-width="0.8" stroke-linejoin="round"/>
<polygon points="669.4,805.6 711.4,817.9 813.2,668.1 775.6,658.8" fill="#508b29" stroke="#2a5518" stroke-width="0.8" stroke-linejoin="round"/>
<polygon points="557.3,597.6 571.4,601.0 552.0,446.9 537.0,443.8" fill="#5c9e30" stroke="#2a5518" stroke-width="0.8" stroke-linejoin="round"/>
<polygon points="571.4,601.0 579.9,592.4 561.3,439.1 552.0,446.9" fill="#4a8326" stroke="#2a5518" stroke-width="0.8" stroke-linejoin="round"/>
<polygon points="537.0,443.8 552.0,446.9 561.3,439.1 546.3,436.1" fill="#508b29" stroke="#2a5518" stroke-width="0.8" stroke-linejoin="round"/>
<polygon points="791.0,654.9 806.9,658.8 804.2,498.6 787.0,495.1" fill="#5c9e30" stroke="#2a5518" stroke-width="0.8" stroke-linejoin="round"/>
<polygon points="806.9,658.8 813.6,649.1 811.4,489.8 804.2,498.6" fill="#4a8326" stroke="#2a5518" stroke-width="0.8" stroke-linejoin="round"/>
<polygon points="787.0,495.1 804.2,498.6 811.4,489.8 794.4,486.4" fill="#508b29" stroke="#2a5518" stroke-width="0.8" stroke-linejoin="round"/>
<polygon points="316.7,398.6 330.0,401.3 326.1,383.4 312.7,380.7" fill="#5c9e30" stroke="#2a5518" stroke-width="0.8" stroke-linejoin="round"/>
<polygon points="330.0,401.3 340.7,394.4 336.9,376.6 326.1,383.4" fill="#4a8326" stroke="#2a5518" stroke-width="0.8" stroke-linejoin="round"/>
<polygon points="312.7,380.7 326.1,383.4 336.9,376.6 323.6,374.0" fill="#508b29" stroke="#2a5518" stroke-width="0.8" stroke-linejoin="round"/>
<polygon points="162.0,707.4 407.3,782.9 402.8,762.6 155.5,687.9" fill="#5c9e30" stroke="#2a5518" stroke-width="0.8" stroke-linejoin="round"/>
<polygon points="407.3,782.9 433.8,755.5 429.7,735.5 402.8,762.6" fill="#4a8326" stroke="#2a5518" stroke-width="0.8" stroke-linejoin="round"/>
<polygon points="155.5,687.9 402.8,762.6 429.7,735.5 186.1,664.3" fill="#508b29" stroke="#2a5518" stroke-width="0.8" stroke-linejoin="round"/>
<polygon points="329.0,402.0 536.1,444.5 533.6,425.8 325.0,384.0" fill="#5c9e30" stroke="#2a5518" stroke-width="0.8" stroke-linejoin="round"/>
<polygon points="536.1,444.5 547.2,435.4 544.8,416.8 533.6,425.8" fill="#4a8326" stroke="#2a5518" stroke-width="0.8" stroke-linejoin="round"/>
<polygon points="325.0,384.0 533.6,425.8 544.8,416.8 337.9,376.0" fill="#508b29" stroke="#2a5518" stroke-width="0.8" stroke-linejoin="round"/>
<polygon points="134.6,512.6 151.9,517.0 145.8,497.3 128.4,493.0" fill="#5c9e30" stroke="#2a5518" stroke-width="0.8" stroke-linejoin="round"/>
<polygon points="151.9,517.0 331.2,401.6 327.3,383.6 145.8,497.3" fill="#4a8326" stroke="#2a5518" stroke-width="0.8" stroke-linejoin="round"/>
<polygon points="128.4,493.0 145.8,497.3 327.3,383.6 311.4,380.4" fill="#508b29" stroke="#2a5518" stroke-width="0.8" stroke-linejoin="round"/>
<polygon points="312.7,380.7 326.1,383.4 297.7,253.0 283.6,250.7" fill="#5c9e30" stroke="#2a5518" stroke-width="0.8" stroke-linejoin="round"/>
<polygon points="326.1,383.4 336.9,376.6 309.3,247.1 297.7,253.0" fill="#4a8326" stroke="#2a5518" stroke-width="0.8" stroke-linejoin="round"/>
<polygon points="283.6,250.7 297.7,253.0 309.3,247.1 295.4,244.9" fill="#508b29" stroke="#2a5518" stroke-width="0.8" stroke-linejoin="round"/>
<polygon points="407.3,782.9 691.6,870.3 689.9,849.4 402.8,762.6" fill="#5c9e30" stroke="#2a5518" stroke-width="0.8" stroke-linejoin="round"/>
<polygon points="691.6,870.3 712.8,838.5 711.4,817.9 689.9,849.4" fill="#4a8326" stroke="#2a5518" stroke-width="0.8" stroke-linejoin="round"/>
<polygon points="402.8,762.6 689.9,849.4 711.4,817.9 429.7,735.5" fill="#508b29" stroke="#2a5518" stroke-width="0.8" stroke-linejoin="round"/>
<polygon points="173.6,683.8 187.4,687.9 136.0,525.9 121.4,522.2" fill="#5c9e30" stroke="#2a5518" stroke-width="0.8" stroke-linejoin="round"/>
<polygon points="187.4,687.9 200.3,677.7 150.5,516.6 136.0,525.9" fill="#4a8326" stroke="#2a5518" stroke-width="0.8" stroke-linejoin="round"/>
<polygon points="121.4,522.2 136.0,525.9 150.5,516.6 136.0,513.0" fill="#508b29" stroke="#2a5518" stroke-width="0.8" stroke-linejoin="round"/>
<polygon points="537.0,443.8 552.0,446.9 549.7,428.2 534.5,425.1" fill="#5c9e30" stroke="#2a5518" stroke-width="0.8" stroke-linejoin="round"/>
<polygon points="552.0,446.9 561.3,439.1 559.0,420.5 549.7,428.2" fill="#4a8326" stroke="#2a5518" stroke-width="0.8" stroke-linejoin="round"/>
<polygon points="534.5,425.1 549.7,428.2 559.0,420.5 543.9,417.5" fill="#508b29" stroke="#2a5518" stroke-width="0.8" stroke-linejoin="round"/>
<polygon points="147.1,496.4 374.0,552.1 532.2,425.5 326.3,384.3" fill="url(#mg2)" stroke="#6a2c7a" stroke-width="0.6" stroke-linejoin="round"/>
<polygon points="283.6,250.7 297.7,253.0 293.2,232.7 279.1,230.5" fill="#5c9e30" stroke="#2a5518" stroke-width="0.8" stroke-linejoin="round"/>
<polygon points="297.7,253.0 309.3,247.1 305.0,227.0 293.2,232.7" fill="#4a8326" stroke="#2a5518" stroke-width="0.8" stroke-linejoin="round"/>
<polygon points="279.1,230.5 293.2,232.7 305.0,227.0 291.0,224.8" fill="#508b29" stroke="#2a5518" stroke-width="0.8" stroke-linejoin="round"/>
<polygon points="665.7,831.1 683.9,836.5 669.4,661.9 649.7,656.9" fill="#5c9e30" stroke="#2a5518" stroke-width="0.8" stroke-linejoin="round"/>
<polygon points="683.9,836.5 693.1,823.1 679.7,649.5 669.4,661.9" fill="#4a8326" stroke="#2a5518" stroke-width="0.8" stroke-linejoin="round"/>
<polygon points="649.7,656.9 669.4,661.9 679.7,649.5 660.1,644.6" fill="#508b29" stroke="#2a5518" stroke-width="0.8" stroke-linejoin="round"/>
<polygon points="402.8,752.4 418.5,757.1 382.8,588.8 365.9,584.5" fill="#5c9e30" stroke="#2a5518" stroke-width="0.8" stroke-linejoin="round"/>
<polygon points="418.5,757.1 429.9,745.4 395.5,578.1 382.8,588.8" fill="#4a8326" stroke="#2a5518" stroke-width="0.8" stroke-linejoin="round"/>
<polygon points="365.9,584.5 382.8,588.8 395.5,578.1 378.8,573.9" fill="#508b29" stroke="#2a5518" stroke-width="0.8" stroke-linejoin="round"/>
<polygon points="121.4,522.2 136.0,525.9 129.7,506.1 115.0,502.4" fill="#5c9e30" stroke="#2a5518" stroke-width="0.8" stroke-linejoin="round"/>
<polygon points="136.0,525.9 150.5,516.6 144.4,496.9 129.7,506.1" fill="#4a8326" stroke="#2a5518" stroke-width="0.8" stroke-linejoin="round"/>
<polygon points="115.0,502.4 129.7,506.1 144.4,496.9 129.8,493.3" fill="#508b29" stroke="#2a5518" stroke-width="0.8" stroke-linejoin="round"/>
<polygon points="551.1,447.6 786.3,495.9 785.8,476.4 548.8,428.9" fill="#5c9e30" stroke="#2a5518" stroke-width="0.8" stroke-linejoin="round"/>
<polygon points="786.3,495.9 795.1,485.6 794.7,466.2 785.8,476.4" fill="#4a8326" stroke="#2a5518" stroke-width="0.8" stroke-linejoin="round"/>
<polygon points="548.8,428.9 785.8,476.4 794.7,466.2 559.9,419.8" fill="#508b29" stroke="#2a5518" stroke-width="0.8" stroke-linejoin="round"/>
<polygon points="534.5,425.1 549.7,428.2 532.4,291.6 516.5,289.0" fill="#5c9e30" stroke="#2a5518" stroke-width="0.8" stroke-linejoin="round"/>
<polygon points="549.7,428.2 559.0,420.5 542.5,284.9 532.4,291.6" fill="#4a8326" stroke="#2a5518" stroke-width="0.8" stroke-linejoin="round"/>
<polygon points="516.5,289.0 532.4,291.6 542.5,284.9 526.6,282.4" fill="#508b29" stroke="#2a5518" stroke-width="0.8" stroke-linejoin="round"/>
<polygon points="377.2,573.5 397.1,578.5 392.9,558.0 372.8,553.0" fill="#5c9e30" stroke="#2a5518" stroke-width="0.8" stroke-linejoin="round"/>
<polygon points="397.1,578.5 553.4,447.2 551.1,428.4 392.9,558.0" fill="#4a8326" stroke="#2a5518" stroke-width="0.8" stroke-linejoin="round"/>
<polygon points="372.8,553.0 392.9,558.0 551.1,428.4 533.1,424.8" fill="#508b29" stroke="#2a5518" stroke-width="0.8" stroke-linejoin="round"/>
<polygon points="296.5,253.6 515.5,289.6 512.7,268.3 292.1,233.3" fill="#5c9e30" stroke="#2a5518" stroke-width="0.8" stroke-linejoin="round"/>
<polygon points="515.5,289.6 527.6,281.7 524.9,260.6 512.7,268.3" fill="#4a8326" stroke="#2a5518" stroke-width="0.8" stroke-linejoin="round"/>
<polygon points="292.1,233.3 512.7,268.3 524.9,260.6 306.1,226.5" fill="#508b29" stroke="#2a5518" stroke-width="0.8" stroke-linejoin="round"/>
<polygon points="82.9,349.1 101.2,352.9 94.2,330.2 75.8,326.5" fill="#5c9e30" stroke="#2a5518" stroke-width="0.8" stroke-linejoin="round"/>
<polygon points="101.2,352.9 299.0,253.2 294.6,232.9 94.2,330.2" fill="#4a8326" stroke="#2a5518" stroke-width="0.8" stroke-linejoin="round"/>
<polygon points="75.8,326.5 94.2,330.2 294.6,232.9 277.8,230.3" fill="#508b29" stroke="#2a5518" stroke-width="0.8" stroke-linejoin="round"/>
<polygon points="115.0,502.4 129.7,506.1 83.6,360.7 68.1,357.5" fill="#5c9e30" stroke="#2a5518" stroke-width="0.8" stroke-linejoin="round"/>
<polygon points="129.7,506.1 144.4,496.9 99.7,352.6 83.6,360.7" fill="#4a8326" stroke="#2a5518" stroke-width="0.8" stroke-linejoin="round"/>
<polygon points="68.1,357.5 83.6,360.7 99.7,352.6 84.4,349.4" fill="#508b29" stroke="#2a5518" stroke-width="0.8" stroke-linejoin="round"/>
<polygon points="787.0,495.1 804.2,498.6 803.9,479.1 786.5,475.6" fill="#5c9e30" stroke="#2a5518" stroke-width="0.8" stroke-linejoin="round"/>
<polygon points="804.2,498.6 811.4,489.8 811.2,470.4 803.9,479.1" fill="#4a8326" stroke="#2a5518" stroke-width="0.8" stroke-linejoin="round"/>
<polygon points="786.5,475.6 803.9,479.1 811.2,470.4 794.0,467.0" fill="#508b29" stroke="#2a5518" stroke-width="0.8" stroke-linejoin="round"/>
<polygon points="394.1,557.0 657.4,621.6 784.2,476.1 550.2,429.2" fill="url(#mg2)" stroke="#6a2c7a" stroke-width="0.6" stroke-linejoin="round"/>
<polygon points="134.6,526.8 364.7,585.5 360.1,564.9 128.3,507.0" fill="#5c9e30" stroke="#2a5518" stroke-width="0.8" stroke-linejoin="round"/>
<polygon points="364.7,585.5 380.0,572.9 375.6,552.5 360.1,564.9" fill="#4a8326" stroke="#2a5518" stroke-width="0.8" stroke-linejoin="round"/>
<polygon points="128.3,507.0 360.1,564.9 375.6,552.5 145.8,496.1" fill="#508b29" stroke="#2a5518" stroke-width="0.8" stroke-linejoin="round"/>
<polygon points="516.5,289.0 532.4,291.6 529.8,270.2 513.7,267.7" fill="#5c9e30" stroke="#2a5518" stroke-width="0.8" stroke-linejoin="round"/>
<polygon points="532.4,291.6 542.5,284.9 539.9,263.7 529.8,270.2" fill="#4a8326" stroke="#2a5518" stroke-width="0.8" stroke-linejoin="round"/>
<polygon points="513.7,267.7 529.8,270.2 539.9,263.7 523.9,261.2" fill="#508b29" stroke="#2a5518" stroke-width="0.8" stroke-linejoin="round"/>
<polygon points="95.7,329.4 336.8,377.2 511.2,268.1 293.4,233.5" fill="url(#mgT)" stroke="#6a2c7a" stroke-width="0.6" stroke-linejoin="round"/>
<polygon points="68.1,357.5 83.6,360.7 76.3,337.8 60.8,334.7" fill="#5c9e30" stroke="#2a5518" stroke-width="0.8" stroke-linejoin="round"/>
<polygon points="83.6,360.7 99.7,352.6 92.7,329.9 76.3,337.8" fill="#4a8326" stroke="#2a5518" stroke-width="0.8" stroke-linejoin="round"/>
<polygon points="60.8,334.7 76.3,337.8 92.7,329.9 77.2,326.8" fill="#508b29" stroke="#2a5518" stroke-width="0.8" stroke-linejoin="round"/>
<polygon points="786.5,475.6 803.9,479.1 801.4,335.8 783.0,332.7" fill="#5c9e30" stroke="#2a5518" stroke-width="0.8" stroke-linejoin="round"/>
<polygon points="803.9,479.1 811.2,470.4 809.2,328.1 801.4,335.8" fill="#4a8326" stroke="#2a5518" stroke-width="0.8" stroke-linejoin="round"/>
<polygon points="783.0,332.7 801.4,335.8 809.2,328.1 791.0,325.2" fill="#508b29" stroke="#2a5518" stroke-width="0.8" stroke-linejoin="round"/>
<polygon points="658.3,644.1 681.5,649.9 679.9,628.4 656.4,622.7" fill="#5c9e30" stroke="#2a5518" stroke-width="0.8" stroke-linejoin="round"/>
<polygon points="681.5,649.9 805.8,498.9 805.5,479.4 679.9,628.4" fill="#4a8326" stroke="#2a5518" stroke-width="0.8" stroke-linejoin="round"/>
<polygon points="656.4,622.7 679.9,628.4 805.5,479.4 784.9,475.3" fill="#508b29" stroke="#2a5518" stroke-width="0.8" stroke-linejoin="round"/>
<polygon points="365.9,584.5 382.8,588.8 378.4,568.1 361.3,563.9" fill="#5c9e30" stroke="#2a5518" stroke-width="0.8" stroke-linejoin="round"/>
<polygon points="382.8,588.8 395.5,578.1 391.3,557.6 378.4,568.1" fill="#4a8326" stroke="#2a5518" stroke-width="0.8" stroke-linejoin="round"/>
<polygon points="361.3,563.9 378.4,568.1 391.3,557.6 374.4,553.4" fill="#508b29" stroke="#2a5518" stroke-width="0.8" stroke-linejoin="round"/>
<polygon points="531.5,292.2 782.3,333.5 781.7,311.0 528.8,270.9" fill="#5c9e30" stroke="#2a5518" stroke-width="0.8" stroke-linejoin="round"/>
<polygon points="782.3,333.5 791.8,324.5 791.3,302.3 781.7,311.0" fill="#4a8326" stroke="#2a5518" stroke-width="0.8" stroke-linejoin="round"/>
<polygon points="528.8,270.9 781.7,311.0 791.3,302.3 540.9,263.1" fill="#508b29" stroke="#2a5518" stroke-width="0.8" stroke-linejoin="round"/>
<polygon points="340.5,401.9 361.8,406.2 356.9,382.2 335.4,378.0" fill="#5c9e30" stroke="#2a5518" stroke-width="0.8" stroke-linejoin="round"/>
<polygon points="361.8,406.2 534.0,291.8 531.3,270.5 356.9,382.2" fill="#4a8326" stroke="#2a5518" stroke-width="0.8" stroke-linejoin="round"/>
<polygon points="335.4,378.0 356.9,382.2 531.3,270.5 512.2,267.5" fill="#508b29" stroke="#2a5518" stroke-width="0.8" stroke-linejoin="round"/>
<polygon points="361.3,563.9 378.4,568.1 345.9,415.3 327.8,411.6" fill="#5c9e30" stroke="#2a5518" stroke-width="0.8" stroke-linejoin="round"/>
<polygon points="378.4,568.1 391.3,557.6 360.1,405.9 345.9,415.3" fill="#4a8326" stroke="#2a5518" stroke-width="0.8" stroke-linejoin="round"/>
<polygon points="327.8,411.6 345.9,415.3 360.1,405.9 342.2,402.2" fill="#508b29" stroke="#2a5518" stroke-width="0.8" stroke-linejoin="round"/>
<polygon points="381.6,589.9 648.7,658.1 646.7,636.5 377.1,569.1" fill="#5c9e30" stroke="#2a5518" stroke-width="0.8" stroke-linejoin="round"/>
<polygon points="648.7,658.1 661.1,643.4 659.3,622.0 646.7,636.5" fill="#4a8326" stroke="#2a5518" stroke-width="0.8" stroke-linejoin="round"/>
<polygon points="377.1,569.1 646.7,636.5 659.3,622.0 392.5,556.6" fill="#508b29" stroke="#2a5518" stroke-width="0.8" stroke-linejoin="round"/>
<polygon points="783.0,332.7 801.4,335.8 801.0,313.3 782.5,310.3" fill="#5c9e30" stroke="#2a5518" stroke-width="0.8" stroke-linejoin="round"/>
<polygon points="801.4,335.8 809.2,328.1 808.9,305.8 801.0,313.3" fill="#4a8326" stroke="#2a5518" stroke-width="0.8" stroke-linejoin="round"/>
<polygon points="782.5,310.3 801.0,313.3 808.9,305.8 790.5,302.9" fill="#508b29" stroke="#2a5518" stroke-width="0.8" stroke-linejoin="round"/>
<polygon points="82.1,361.5 326.5,412.4 321.2,388.3 74.8,338.6" fill="#5c9e30" stroke="#2a5518" stroke-width="0.8" stroke-linejoin="round"/>
<polygon points="326.5,412.4 343.5,401.4 338.5,377.5 321.2,388.3" fill="#4a8326" stroke="#2a5518" stroke-width="0.8" stroke-linejoin="round"/>
<polygon points="74.8,338.6 321.2,388.3 338.5,377.5 94.2,329.1" fill="#508b29" stroke="#2a5518" stroke-width="0.8" stroke-linejoin="round"/>
<polygon points="358.2,381.4 641.4,437.4 780.0,310.8 530.3,271.1" fill="url(#mgT)" stroke="#6a2c7a" stroke-width="0.6" stroke-linejoin="round"/>
<polygon points="649.7,656.9 669.4,661.9 667.6,640.3 647.7,635.3" fill="#5c9e30" stroke="#2a5518" stroke-width="0.8" stroke-linejoin="round"/>
<polygon points="669.4,661.9 679.7,649.5 678.0,628.0 667.6,640.3" fill="#4a8326" stroke="#2a5518" stroke-width="0.8" stroke-linejoin="round"/>
<polygon points="647.7,635.3 667.6,640.3 678.0,628.0 658.3,623.1" fill="#508b29" stroke="#2a5518" stroke-width="0.8" stroke-linejoin="round"/>
<polygon points="327.8,411.6 345.9,415.3 340.8,391.1 322.5,387.5" fill="#5c9e30" stroke="#2a5518" stroke-width="0.8" stroke-linejoin="round"/>
<polygon points="345.9,415.3 360.1,405.9 355.2,381.9 340.8,391.1" fill="#4a8326" stroke="#2a5518" stroke-width="0.8" stroke-linejoin="round"/>
<polygon points="322.5,387.5 340.8,391.1 355.2,381.9 337.1,378.3" fill="#508b29" stroke="#2a5518" stroke-width="0.8" stroke-linejoin="round"/>
<polygon points="642.6,463.7 667.7,468.8 665.7,443.5 640.3,438.4" fill="#5c9e30" stroke="#2a5518" stroke-width="0.8" stroke-linejoin="round"/>
<polygon points="667.7,468.8 803.1,336.1 802.8,313.6 665.7,443.5" fill="#4a8326" stroke="#2a5518" stroke-width="0.8" stroke-linejoin="round"/>
<polygon points="640.3,438.4 665.7,443.5 802.8,313.6 780.8,310.1" fill="#508b29" stroke="#2a5518" stroke-width="0.8" stroke-linejoin="round"/>
<polygon points="647.7,635.3 667.6,640.3 654.3,479.5 632.9,475.1" fill="#5c9e30" stroke="#2a5518" stroke-width="0.8" stroke-linejoin="round"/>
<polygon points="667.6,640.3 678.0,628.0 665.7,468.4 654.3,479.5" fill="#4a8326" stroke="#2a5518" stroke-width="0.8" stroke-linejoin="round"/>
<polygon points="632.9,475.1 654.3,479.5 665.7,468.4 644.5,464.1" fill="#508b29" stroke="#2a5518" stroke-width="0.8" stroke-linejoin="round"/>
<polygon points="344.5,416.2 631.8,476.1 629.5,450.6 339.4,392.0" fill="#5c9e30" stroke="#2a5518" stroke-width="0.8" stroke-linejoin="round"/>
<polygon points="631.8,476.1 645.6,463.1 643.4,437.8 629.5,450.6" fill="#4a8326" stroke="#2a5518" stroke-width="0.8" stroke-linejoin="round"/>
<polygon points="339.4,392.0 629.5,450.6 643.4,437.8 356.5,381.1" fill="#508b29" stroke="#2a5518" stroke-width="0.8" stroke-linejoin="round"/>
<polygon points="632.9,475.1 654.3,479.5 652.2,453.9 630.6,449.6" fill="#5c9e30" stroke="#2a5518" stroke-width="0.8" stroke-linejoin="round"/>
<polygon points="654.3,479.5 665.7,468.4 663.7,443.1 652.2,453.9" fill="#4a8326" stroke="#2a5518" stroke-width="0.8" stroke-linejoin="round"/>
<polygon points="630.6,449.6 652.2,453.9 663.7,443.1 642.3,438.8" fill="#508b29" stroke="#2a5518" stroke-width="0.8" stroke-linejoin="round"/>
<line x1="10.0" y1="213.0" x2="232.0" y2="250.6" stroke="#a4d6ae" stroke-width="0.8"/>
<line x1="308.0" y1="125.0" x2="328.0" y2="228.0" stroke="#a4d6ae" stroke-width="0.8"/>
<line x1="808.0" y1="303.0" x2="845.0" y2="270.0" stroke="#a4d6ae" stroke-width="0.8"/>
<line x1="10.0" y1="826.7" x2="380.0" y2="955.0" stroke="#c4e4dc" stroke-width="1" stroke-dasharray="4 4" opacity=".5"/>
<line x1="10.0" y1="707.0" x2="233.7" y2="550.9" stroke="#c4e4dc" stroke-width="1" stroke-dasharray="4 4" opacity=".5"/>
<line x1="1044.5" y1="576.7" x2="861.7" y2="955.0" stroke="#c4e4dc" stroke-width="1" stroke-dasharray="4 4" opacity=".5"/>
<line x1="962.0" y1="573.0" x2="1044.0" y2="598.0" stroke="#c4e4dc" stroke-width="1" stroke-dasharray="4 4" opacity=".5"/>
<line x1="104.0" y1="623.3" x2="158.8" y2="639.0" stroke="#101018" stroke-width="1" stroke-dasharray="9 4 2 4"/>
<line x1="182.2" y1="645.7" x2="392.4" y2="706.1" stroke="#101018" stroke-width="1" stroke-dasharray="9 4 2 4"/>
<line x1="416.5" y1="713.1" x2="658.2" y2="782.5" stroke="#101018" stroke-width="1" stroke-dasharray="9 4 2 4"/>
<line x1="686.1" y1="790.5" x2="749.5" y2="808.7" stroke="#101018" stroke-width="1" stroke-dasharray="9 4 2 4"/>
<line x1="727.4" y1="598.0" x2="787.5" y2="612.1" stroke="#101018" stroke-width="1" stroke-dasharray="9 4 2 4"/>
<line x1="809.8" y1="617.4" x2="884.1" y2="634.8" stroke="#101018" stroke-width="1" stroke-dasharray="9 4 2 4"/>
<line x1="101.7" y1="699.0" x2="169.6" y2="648.1" stroke="#101018" stroke-width="1" stroke-dasharray="9 4 2 4"/>
<line x1="187.6" y1="634.6" x2="280.4" y2="565.0" stroke="#101018" stroke-width="1" stroke-dasharray="9 4 2 4"/>
<line x1="345.1" y1="771.9" x2="403.1" y2="715.7" stroke="#101018" stroke-width="1" stroke-dasharray="9 4 2 4"/>
<line x1="421.2" y1="698.2" x2="500.4" y2="621.4" stroke="#101018" stroke-width="1" stroke-dasharray="9 4 2 4"/>
<line x1="624.5" y1="858.5" x2="671.8" y2="793.6" stroke="#101018" stroke-width="1" stroke-dasharray="9 4 2 4"/>
<line x1="689.7" y1="769.0" x2="798.7" y2="619.5" stroke="#101018" stroke-width="1" stroke-dasharray="9 4 2 4"/>
<line x1="813.1" y1="599.8" x2="832.9" y2="572.6" stroke="#101018" stroke-width="1" stroke-dasharray="9 4 2 4"/>
<line x1="136.5" y1="500.9" x2="357.8" y2="555.6" stroke="#d4f4f0" stroke-width="1"/>
<line x1="384.2" y1="562.2" x2="644.4" y2="626.5" stroke="#d4f4f0" stroke-width="1"/>
<line x1="677.2" y1="614.4" x2="796.0" y2="475.8" stroke="#d4f4f0" stroke-width="1"/>
<line x1="785.5" y1="469.8" x2="688.9" y2="450.6" stroke="#d4f4f0" stroke-width="1"/>
<line x1="283.1" y1="404.0" x2="143.1" y2="490.8" stroke="#d4f4f0" stroke-width="1"/>
<line x1="117.6" y1="440.7" x2="343.9" y2="492.8" stroke="#d4f4f0" stroke-width="1"/>
<line x1="371.0" y1="499.1" x2="638.2" y2="560.7" stroke="#d4f4f0" stroke-width="1"/>
<line x1="672.1" y1="549.0" x2="794.8" y2="416.4" stroke="#d4f4f0" stroke-width="1"/>
<line x1="784.0" y1="410.7" x2="737.9" y2="402.2" stroke="#d4f4f0" stroke-width="1"/>
<line x1="202.3" y1="386.9" x2="124.6" y2="431.1" stroke="#d4f4f0" stroke-width="1"/>
<line x1="232.0" y1="467.1" x2="248.5" y2="528.6" stroke="#d4f4f0" stroke-width="1"/>
<line x1="243.5" y1="521.6" x2="248.5" y2="528.6" stroke="#d4f4f0" stroke-width="1"/>
<line x1="249.3" y1="520.1" x2="248.5" y2="528.6" stroke="#d4f4f0" stroke-width="1"/>
<line x1="223.4" y1="391.6" x2="234.6" y2="434.1" stroke="#d4f4f0" stroke-width="1"/>
<line x1="229.6" y1="427.1" x2="234.6" y2="434.1" stroke="#d4f4f0" stroke-width="1"/>
<line x1="235.4" y1="425.6" x2="234.6" y2="434.1" stroke="#d4f4f0" stroke-width="1"/>
<line x1="733.8" y1="482.3" x2="736.8" y2="544.9" stroke="#d4f4f0" stroke-width="1"/>
<line x1="733.4" y1="537.0" x2="736.8" y2="544.9" stroke="#d4f4f0" stroke-width="1"/>
<line x1="739.4" y1="536.7" x2="736.8" y2="544.9" stroke="#d4f4f0" stroke-width="1"/>
<line x1="504.2" y1="529.8" x2="514.0" y2="594.3" stroke="#d4f4f0" stroke-width="1"/>
<line x1="509.8" y1="586.8" x2="514.0" y2="594.3" stroke="#d4f4f0" stroke-width="1"/>
<line x1="515.7" y1="585.9" x2="514.0" y2="594.3" stroke="#d4f4f0" stroke-width="1"/>
<line x1="167.3" y1="406.8" x2="184.2" y2="465.3" stroke="#d4f4f0" stroke-width="1"/>
<line x1="179.1" y1="458.5" x2="184.2" y2="465.3" stroke="#d4f4f0" stroke-width="1"/>
<line x1="184.8" y1="456.8" x2="184.2" y2="465.3" stroke="#d4f4f0" stroke-width="1"/>
<line x1="280.9" y1="403.3" x2="281.3" y2="405.1" stroke="#d4f4f0" stroke-width="1"/>
<line x1="276.5" y1="398.0" x2="281.3" y2="405.1" stroke="#d4f4f0" stroke-width="1"/>
<line x1="282.3" y1="396.6" x2="281.3" y2="405.1" stroke="#d4f4f0" stroke-width="1"/>
<line x1="697.3" y1="521.7" x2="701.5" y2="586.0" stroke="#d4f4f0" stroke-width="1"/>
<line x1="698.0" y1="578.2" x2="701.5" y2="586.0" stroke="#d4f4f0" stroke-width="1"/>
<line x1="704.0" y1="577.8" x2="701.5" y2="586.0" stroke="#d4f4f0" stroke-width="1"/>
<line x1="767.2" y1="446.3" x2="769.2" y2="507.2" stroke="#d4f4f0" stroke-width="1"/>
<line x1="765.9" y1="499.3" x2="769.2" y2="507.2" stroke="#d4f4f0" stroke-width="1"/>
<line x1="771.9" y1="499.1" x2="769.2" y2="507.2" stroke="#d4f4f0" stroke-width="1"/>
<line x1="54.6" y1="262.2" x2="278.6" y2="166.9" stroke="rgba(222,232,230,.8)" stroke-width="3"/>
<line x1="640.5" y1="367.4" x2="794.4" y2="239.2" stroke="rgba(236,242,244,.9)" stroke-width="2"/>
<line x1="76.8" y1="332.3" x2="292.1" y2="228.7" stroke="#f4fbf4" stroke-width="2.2"/>
<line x1="292.1" y1="228.7" x2="795.7" y2="308.1" stroke="#ffffff" stroke-width="2.6"/>
<line x1="647.2" y1="446.3" x2="795.7" y2="308.1" stroke="#f4fbf8" stroke-width="1.6"/>
<line x1="278.6" y1="166.9" x2="290.2" y2="219.9" stroke="#e6f3fb" stroke-width="3.2"/><polygon points="292.1,228.7 285.8,220.9 294.6,219.0" fill="#e6f3fb"/>
<line x1="394.6" y1="183.1" x2="404.1" y2="237.8" stroke="#e6f3fb" stroke-width="3.2"/><polygon points="405.6,246.6 399.6,238.5 408.5,237.0" fill="#e6f3fb"/>
<line x1="518.6" y1="200.5" x2="525.7" y2="256.8" stroke="#e6f3fb" stroke-width="3.2"/><polygon points="526.8,265.7 521.2,257.3 530.2,256.2" fill="#e6f3fb"/>
<line x1="651.5" y1="219.2" x2="655.9" y2="277.2" stroke="#e6f3fb" stroke-width="3.2"/><polygon points="656.6,286.1 651.4,277.5 660.4,276.8" fill="#e6f3fb"/>
<line x1="794.4" y1="239.2" x2="795.6" y2="299.1" stroke="#e6f3fb" stroke-width="3.2"/><polygon points="795.7,308.1 791.1,299.2 800.1,299.0" fill="#e6f3fb"/>
<line x1="54.6" y1="262.2" x2="74.1" y2="323.7" stroke="#e4f1f6" stroke-width="3.2"/><polygon points="76.8,332.3 69.8,325.0 78.4,322.3" fill="#e4f1f6"/>
<line x1="117.9" y1="235.2" x2="135.0" y2="294.5" stroke="#e4f1f6" stroke-width="3.2"/><polygon points="137.5,303.1 130.6,295.7 139.3,293.2" fill="#e4f1f6"/>
<line x1="176.0" y1="210.6" x2="190.9" y2="267.6" stroke="#e4f1f6" stroke-width="3.2"/><polygon points="193.2,276.3 186.6,268.7 195.3,266.5" fill="#e4f1f6"/>
<line x1="229.4" y1="187.9" x2="242.5" y2="242.8" stroke="#e4f1f6" stroke-width="3.2"/><polygon points="244.6,251.6 238.1,243.9 246.9,241.8" fill="#e4f1f6"/>
<line x1="684.9" y1="330.4" x2="689.3" y2="397.6" stroke="#ecf6fc" stroke-width="3.2"/><polygon points="689.8,406.6 684.8,397.9 693.8,397.4" fill="#ecf6fc"/>
<line x1="724.9" y1="297.1" x2="728.0" y2="361.7" stroke="#ecf6fc" stroke-width="3.2"/><polygon points="728.5,370.7 723.5,361.9 732.5,361.5" fill="#ecf6fc"/>
<line x1="761.3" y1="266.8" x2="763.3" y2="329.0" stroke="#ecf6fc" stroke-width="3.2"/><polygon points="763.6,338.0 758.8,329.1 767.8,328.8" fill="#ecf6fc"/>
<line x1="278.6" y1="166.9" x2="794.4" y2="239.2" stroke="#ffffff" stroke-width="3.6"/>
<line x1="76.8" y1="332.3" x2="647.2" y2="446.3" stroke="#ffffff" stroke-width="3"/>
<line x1="54.6" y1="262.2" x2="73.8" y2="322.7" stroke="#eef7ff" stroke-width="3.6"/><polygon points="76.8,332.3 68.5,324.4 79.0,321.1" fill="#eef7ff"/>
<line x1="183.5" y1="285.3" x2="200.2" y2="347.8" stroke="#eef7ff" stroke-width="3.6"/><polygon points="202.8,357.5 194.9,349.2 205.5,346.4" fill="#eef7ff"/>
<line x1="323.1" y1="310.4" x2="336.8" y2="374.9" stroke="#eef7ff" stroke-width="3.6"/><polygon points="338.9,384.7 331.5,376.0 342.2,373.8" fill="#eef7ff"/>
<line x1="474.9" y1="337.6" x2="485.1" y2="404.3" stroke="#eef7ff" stroke-width="3.6"/><polygon points="486.6,414.2 479.6,405.1 490.5,403.5" fill="#eef7ff"/>
<line x1="640.5" y1="367.4" x2="646.4" y2="436.3" stroke="#eef7ff" stroke-width="3.6"/><polygon points="647.2,446.3 640.9,436.8 651.8,435.9" fill="#eef7ff"/>
<line x1="54.6" y1="262.2" x2="640.5" y2="367.4" stroke="#ffffff" stroke-width="3.6"/>
<line x1="255.3" y1="255.5" x2="759.9" y2="341.5" stroke="#e8d8f0" stroke-width="1" stroke-dasharray="7 6"/>
<line x1="768.0" y1="342.0" x2="778.3" y2="646.0" stroke="#b8f0c8" stroke-width="0.8" opacity=".7"/>
<line x1="778.3" y1="646.0" x2="785.0" y2="955.0" stroke="#b0f0c0" stroke-width="1" stroke-dasharray="13 5"/>
<polygon points="340.0,415.3 637.2,477.2 634.9,451.7 334.8,391.1" fill="none" stroke="#f6ee10" stroke-width="2.200"/>
<line x1="352.0" y1="380.2" x2="648.7" y2="438.9" stroke="#f2c030" stroke-width="1.6"/>
<line x1="334.8" y1="391.1" x2="352.0" y2="380.2" stroke="#f6ee10" stroke-width="1.4"/>
<line x1="634.9" y1="451.7" x2="648.7" y2="438.9" stroke="#f6ee10" stroke-width="1.4"/>
<line x1="76.8" y1="332.3" x2="647.2" y2="446.3" stroke="#ffffff" stroke-width="2.6"/>
<line x1="334.9" y1="365.6" x2="336.8" y2="374.9" stroke="#eef7ff" stroke-width="3.6"/><polygon points="338.9,384.7 331.5,376.0 342.2,373.8" fill="#eef7ff"/>
<line x1="483.6" y1="394.6" x2="485.1" y2="404.3" stroke="#eef7ff" stroke-width="3.6"/><polygon points="486.6,414.2 479.6,405.1 490.5,403.5" fill="#eef7ff"/>
<line x1="645.5" y1="426.1" x2="646.4" y2="436.3" stroke="#eef7ff" stroke-width="3.6"/><polygon points="647.2,446.3 640.9,436.8 651.8,435.9" fill="#eef7ff"/>
<rect x="73.8" y="329.3" width="6" height="6" fill="#e020c8" stroke="#f4a8ec" stroke-width=".6"/>
<rect x="644.2" y="443.3" width="6" height="6" fill="#e020c8" stroke="#f4a8ec" stroke-width=".6"/>
<rect x="289.1" y="225.7" width="6" height="6" fill="#e020c8" stroke="#f4a8ec" stroke-width=".6"/>
<rect x="792.7" y="305.1" width="6" height="6" fill="#e020c8" stroke="#f4a8ec" stroke-width=".6"/>
<text x="93.5" y="624.0" font-size="16" font-weight="bold" fill="#08080c" text-anchor="middle">A</text>
<text x="763.5" y="812.0" font-size="16" font-weight="bold" fill="#08080c" text-anchor="middle">A</text>
<text x="278.0" y="495.0" font-size="16" font-weight="bold" fill="#08080c" text-anchor="middle">Б</text>
<text x="877.0" y="634.0" font-size="16" font-weight="bold" fill="#08080c" text-anchor="middle">Б</text>
<text x="93.0" y="696.0" font-size="16" font-weight="bold" fill="#08080c" text-anchor="middle">1</text>
<text x="395.0" y="472.5" font-size="16" font-weight="bold" fill="#08080c" text-anchor="middle">1</text>
<text x="336.0" y="772.0" font-size="16" font-weight="bold" fill="#08080c" text-anchor="middle">2</text>
<text x="598.5" y="518.0" font-size="16" font-weight="bold" fill="#08080c" text-anchor="middle">2</text>
<text x="613.5" y="857.0" font-size="16" font-weight="bold" fill="#08080c" text-anchor="middle">3</text>
<text x="827.0" y="569.0" font-size="16" font-weight="bold" fill="#08080c" text-anchor="middle">3</text>
<g fill="none" stroke-linecap="round">
<path d="M188.500 600.500l26 6 7 24-21-5zM180 607l8.500-6.500M191 623l24-16.500M183 642l38-11.500M172 620l10 2.500M182 647l26 8" stroke="#38e070" stroke-width="1.400"/>
<path d="M160.500 648.500l33 10 14-2.500M189 642l15-12M186.500 623.500l20-3.500 2.500 9.500M189 642l16 5" stroke="#e86a48" stroke-width="1.300"/>
</g>
<text x="168.6" y="601.8" font-size="24" fill="#e8683c" text-anchor="middle" textLength="12.5" lengthAdjust="spacingAndGlyphs">Z</text>
<text x="217" y="616.4" font-size="21" fill="#e8683c" text-anchor="middle" textLength="11.5" lengthAdjust="spacingAndGlyphs">Y</text>
<text x="223" y="656.5" font-size="22" fill="#e8683c" text-anchor="middle" textLength="11.5" lengthAdjust="spacingAndGlyphs">X</text>
<path d="M1598 946l6-8 6 8z" fill="#1428b0"/><path d="M1610 933h11l-9 12" fill="none" stroke="#2a3cc8" stroke-width="1.200"/>
</svg></div>
<div id="dlg" class="a" style="left:844px;top:136px;width:748px;height:438px;box-sizing:border-box;border:1px solid #54595f;border-radius:7px;background:linear-gradient(180deg,#eef1f5 0,#e2e7ef 30px,#d8e1ef 150px,#c3d2ec 300px,#adc3ea 100%);box-shadow:0 0 0 1px rgba(255,255,255,.65) inset,0 2px 13px 2px rgba(0,0,20,.45),0 0 3px rgba(0,0,0,.5)">
<div class="a" style="left:90px;top:0;width:640px;height:28px;overflow:hidden;border-radius:0 7px 0 0"><div class="a" style="left:40px;top:-20px;width:60px;height:80px;background:rgba(255,255,255,.35);transform:skewX(-35deg);filter:blur(6px)"></div><div class="a" style="left:300px;top:-20px;width:90px;height:80px;background:rgba(255,255,255,.4);transform:skewX(-35deg);filter:blur(8px)"></div><div class="a" style="left:470px;top:-20px;width:50px;height:80px;background:rgba(255,255,255,.3);transform:skewX(-35deg);filter:blur(6px)"></div></div>
<svg class="a" style="left:5px;top:6px;" width="17" height="17" viewBox="0 0 17 17"><rect x="0" y="0" width="16.500" height="13" fill="#d81848"/><rect x="0" y="13" width="10.500" height="3.500" fill="#2c5cb4"/><g fill="#fff"><rect x="0" y="5.700" width="2.600" height="1.700"/><rect x="5.500" y="5.700" width="5" height="1.700"/><rect x="13.500" y="5.700" width="3" height="1.700"/><ellipse cx="8" cy="3.200" rx="1.800" ry="1"/><ellipse cx="4.500" cy="4.600" rx="1.600" ry=".9"/><ellipse cx="11.500" cy="4.600" rx="1.600" ry=".9"/><ellipse cx="4.500" cy="8.600" rx="1.600" ry=".9"/><ellipse cx="11.500" cy="8.600" rx="1.600" ry=".9"/><ellipse cx="8" cy="10.200" rx="1.800" ry="1"/></g></svg>
<span class="t" style="left:27px;top:7px;letter-spacing:0.05px;text-shadow:0 0 5px #fff,0 0 8px #fff;">Свойства равномерной нагрузки</span>
<div class="a" style="left:693px;top:0px;width:46px;height:19px;box-sizing:border-box;border:1px solid #7f8792;border-top:0;border-radius:0 0 4px 4px;background:linear-gradient(#e9ecf0,#dfe3e9 45%,#cfd5dd 50%,#d9dee5);box-shadow:inset 0 0 0 1px rgba(255,255,255,.6)"></div>
<svg class="a" style="left:710px;top:3px;" width="13" height="11"><path d="M2 1.500l9 8M11 1.500l-9 8" stroke="#4a4f57" stroke-width="3.800"/><path d="M2 1.500l9 8M11 1.500l-9 8" stroke="#fafbfc" stroke-width="2"/></svg>
<div class="a" style="left:5.5px;top:28.5px;width:734px;height:401px;box-sizing:border-box;background:#f0f0f0;border:1px solid #7c838d;box-shadow:0 0 0 1px rgba(255,255,255,.6)"></div>
<div class="a" style="left:12px;top:37px;width:721px;height:37px;box-sizing:border-box;border:1px solid #e0e0e0;border-radius:3px;box-shadow:inset 1px 1px 0 #fbfbfb,1px 1px 0 #fbfbfb"></div>
<div class="a" style="left:12px;top:87.5px;width:721px;height:38.5px;box-sizing:border-box;border:1px solid #e0e0e0;border-radius:3px;box-shadow:inset 1px 1px 0 #fbfbfb,1px 1px 0 #fbfbfb"></div>
<div class="btn" style="left:15.5px;top:46px;width:65.5px;height:22px;line-height:20px"><span style="letter-spacing:-0.29px;margin-right:0.29px">Сохранить</span></div>
<div class="btn" style="left:87px;top:46px;width:61.5px;height:22px;line-height:20px"><span style="letter-spacing:-0.09px;margin-right:0.09px">Загрузить</span></div>
<div class="cmb" style="left:154.5px;top:45.5px;width:237px;height:20px;line-height:19px">standard</div>
<div class="btn" style="left:398.5px;top:46px;width:86px;height:22px;line-height:20px"><span style="letter-spacing:-0.11px;margin-right:0.11px">Сохранить как</span></div>
<div class="inp" style="left:490.5px;top:48.5px;width:240px;height:18px"></div>
<div class="cb" style="left:14.5px;top:103.5px;"><svg width="9" height="9" viewBox="0 0 9 9"><path d="M1.200 4.200l2.200 3L7.800 1" fill="none" stroke="#31347c" stroke-width="1.700"/></svg></div>
<span class="t" style="left:30px;top:103px;letter-spacing:0.20px;">Имя группы нагрузки</span>
<div class="cmb" style="left:169px;top:97.5px;width:245px;height:20px;line-height:19px">Группа по умолчанию</div>
<div class="btn" style="left:619px;top:98.5px;width:110.5px;height:22px;line-height:20px"><span style="letter-spacing:0.12px;margin-right:-0.12px">Группы нагрузок...</span></div>
<div class="a" style="left:10px;top:137.5px;width:68px;height:21px;box-sizing:border-box;border:1px solid #898c95;border-bottom:0;background:linear-gradient(#f2f2f2,#ebebeb 50%,#dddddd 50%,#cfcfcf)"></div>
<span class="t" style="left:16px;top:141px;letter-spacing:-0.03px;">Величина</span>
<div class="a" style="left:77px;top:137.5px;width:97px;height:21px;box-sizing:border-box;border:1px solid #898c95;border-bottom:0;background:linear-gradient(#f2f2f2,#ebebeb 50%,#dddddd 50%,#cfcfcf)"></div>
<span class="t" style="left:85px;top:141px;letter-spacing:-0.14px;">Распределение</span>
<div class="a" style="left:8px;top:157.5px;width:729px;height:240px;box-sizing:border-box;border:1px solid #898c95;background:#f0f0f0"></div>
<div class="a" style="left:173px;top:135px;width:111px;height:24px;box-sizing:border-box;border:1px solid #898c95;border-bottom:0;background:#fff;z-index:2"></div>
<span class="t" style="left:179px;top:140px;letter-spacing:-0.09px;z-index:3;">Загрузить панель</span>
<div class="a" style="left:15px;top:171.5px;width:618px;height:217.5px;box-sizing:border-box;border:1px solid #e0e0e0;border-radius:3px;box-shadow:inset 1px 1px 0 #fbfbfb,1px 1px 0 #fbfbfb"></div>
<span class="t" style="left:21px;top:165px;background:#f0f0f0;padding:0 2px"><span style="letter-spacing:-0.09px">Загрузить панель</span></span>
<div class="cb" style="left:18px;top:188.5px;"><svg width="9" height="9" viewBox="0 0 9 9"><path d="M1.200 4.200l2.200 3L7.800 1" fill="none" stroke="#31347c" stroke-width="1.700"/></svg></div>
<span class="t" style="left:34px;top:188px;letter-spacing:0.07px;">Кручение</span>
<div class="cmb" style="left:103px;top:183px;width:74px;height:20px;line-height:19px">Один</div>
<div class="cb" style="left:18px;top:219.5px;"><svg width="9" height="9" viewBox="0 0 9 9"><path d="M1.200 4.200l2.200 3L7.800 1" fill="none" stroke="#31347c" stroke-width="1.700"/></svg></div>
<span class="t" style="left:34.5px;top:219px;letter-spacing:-0.01px;">Направление основной оси</span>
<span class="t" style="left:212px;top:219px;">x</span>
<div class="inp" style="left:231px;top:216px;width:72px;height:19px;line-height:19px">1.00</div>
<span class="t" style="left:212px;top:248px;">y</span>
<div class="inp" style="left:231px;top:245px;width:72px;height:19px;line-height:19px">0.00</div>
<span class="t" style="left:212px;top:277px;">z</span>
<div class="inp" style="left:231px;top:274px;width:72px;height:19px;line-height:19px">0.00</div>
<div class="a" style="left:307px;top:213px;width:1px;height:81px;background:#a0a0a0"></div>
<span class="t" style="left:316px;top:226px;letter-spacing:-0.08px;">Выберите направление</span>
<span class="t" style="left:352px;top:241px;letter-spacing:-0.02px;">из модели</span>
<div class="btn" style="left:468px;top:214px;width:131.5px;height:22.5px;line-height:20.5px"><span style="letter-spacing:-0.23px;margin-right:0.23px">Параллельно детали...</span></div>
<div class="btn" style="left:468px;top:243.5px;width:158px;height:22px;line-height:20px"><span style="letter-spacing:-0.10px;margin-right:0.10px">Перпендикулярно детали...</span></div>
<div class="btn" style="left:314px;top:272.5px;width:312px;height:22px;line-height:20px"><span style="letter-spacing:-0.07px;margin-right:0.07px">Отображать направление для выбранных нагрузок</span></div>
<div class="cb" style="left:18px;top:308.5px;"><svg width="9" height="9" viewBox="0 0 9 9"><path d="M1.200 4.200l2.200 3L7.800 1" fill="none" stroke="#31347c" stroke-width="1.700"/></svg></div>
<span class="t" style="left:34.5px;top:308px;letter-spacing:0.01px;">Автоматический вес на основной оси</span>
<div class="cmb" style="left:425px;top:302.5px;width:44.500px;height:20px;line-height:18px;border:1px solid #b4b7bd;box-shadow:inset 0 0 0 1px #fff;color:#000">Да</div>
<div class="a" style="left:450px;top:304.5px;width:18px;height:16px;background:#f0f0f0"></div><div class="a" style="left:457px;top:311px;border:4px solid transparent;border-top:4px solid #9a9a9a;border-bottom:0"></div>
<div class="cb" style="left:504px;top:308.5px;"><svg width="9" height="9" viewBox="0 0 9 9"><path d="M1.200 4.200l2.200 3L7.800 1" fill="none" stroke="#31347c" stroke-width="1.700"/></svg></div>
<span class="t" style="left:520.5px;top:308px;letter-spacing:-0.89px;">Вес</span>
<div class="inp" style="left:555.5px;top:305.5px;width:71px;height:18px;line-height:16px;background:#f0f0f0;border-color:#dadcdf;border-top-color:#c2c4c8">0.50</div>
<div class="cb" style="left:18px;top:338px;"><svg width="9" height="9" viewBox="0 0 9 9"><path d="M1.200 4.200l2.200 3L7.800 1" fill="none" stroke="#31347c" stroke-width="1.700"/></svg></div>
<span class="t" style="left:34.5px;top:337.5px;letter-spacing:-0.01px;">Угол рассеивания нагрузки</span>
<div class="inp" style="left:425.5px;top:334px;width:71px;height:18.500px;line-height:16px">0.00000</div>
<div class="cb" style="left:18px;top:367px;"><svg width="9" height="9" viewBox="0 0 9 9"><path d="M1.200 4.200l2.200 3L7.800 1" fill="none" stroke="#31347c" stroke-width="1.700"/></svg></div>
<span class="t" style="left:34.5px;top:366.5px;letter-spacing:-0.07px;">Использовать распределение нагрузки для неразрывной структуры</span>
<div class="cmb" style="left:425.5px;top:360px;width:44px;height:20px;line-height:19px">Нет</div>
<div class="btn" style="left:9px;top:403px;width:64px;height:22.5px;line-height:20.5px">OK</div>
<div class="btn" style="left:79px;top:403px;width:81px;height:22.5px;line-height:20.5px"><span style="letter-spacing:0.22px;margin-right:-0.22px">Применить</span></div>
<div class="btn" style="left:166px;top:403px;width:72px;height:22.5px;line-height:20.5px"><span style="letter-spacing:0.11px;margin-right:-0.11px">Изменить</span></div>
<div class="btn" style="left:244px;top:403px;width:71.5px;height:22.5px;line-height:20.5px"><span style="letter-spacing:0.28px;margin-right:-0.28px">Получить</span></div>
<div class="btn" style="left:672px;top:403px;width:64px;height:22.5px;line-height:20.5px"><span style="letter-spacing:-0.17px;margin-right:0.17px">Отмена</span></div>
<div class="btn" style="left:322px;top:405px;width:55px;height:19px"></div>
<svg class="a" style="left:326px;top:407px;" width="48" height="15"><rect x="1" y="1.500" width="9.500" height="10" fill="#fff" stroke="#000" stroke-width="1.300"/><path d="M3 6l2.500 3.500L9 3" fill="none" stroke="#000" stroke-width="1.400"/><path d="M21 13.500L26 1" stroke="#000" stroke-width="1.600"/><path d="M34 12V2h10" fill="none" stroke="#000" stroke-width="1.500"/><rect x="35" y="3" width="8" height="8.500" fill="#fff"/></svg>
</div>
<div class="a" style="left:1636px;top:96px;width:17px;height:860px;background:linear-gradient(90deg,#e4e4e6,#f2f2f3 40%,#fafafa)"></div>
<div class="a" style="left:1638px;top:114px;width:14px;height:766px;box-sizing:border-box;border:1px solid #9a9a9e;border-radius:2px;background:linear-gradient(90deg,#f7f7f8,#e9e9ec 45%,#d3d3d8 55%,#c4c4ca)"></div>
<svg class="a" style="left:1640px;top:101px" width="10" height="7"><path d="M1 6l4-4.500 4 4.500z" fill="#3c3c3c"/></svg>
<svg class="a" style="left:1640px;top:944px" width="10" height="7"><path d="M1 1.500l4 4 4-4z" fill="#3c3c3c"/></svg>
<div class="a" style="left:1641px;top:493px;width:8px;height:1px;background:#6a6a70;box-shadow:0 2px 0 #6a6a70,0 4px 0 #6a6a70,0 6px 0 #6a6a70"></div>
<div class="a" style="left:0;top:956px;width:1636px;height:17px;background:linear-gradient(#e4e4e6,#f2f2f3 40%,#fafafa)"></div>
<div class="a" style="left:0;top:104px;width:2px;height:869px;background:#8e8e90"></div><div class="a" style="left:2px;top:104px;width:1px;height:869px;background:#4a4a4c"></div>
<div class="a" style="left:21px;top:958px;width:1558px;height:14px;box-sizing:border-box;border:1px solid #9a9a9e;border-radius:2px;background:linear-gradient(#f7f7f8,#e9e9ec 45%,#d3d3d8 55%,#c4c4ca)"></div>
<svg class="a" style="left:12px;top:960px" width="7" height="10"><path d="M6 1l-4.500 4 4.500 4z" fill="#3c3c3c"/></svg>
<svg class="a" style="left:1624px;top:960px" width="7" height="10"><path d="M1.500 1l4 4-4 4z" fill="#3c3c3c"/></svg>
<div class="a" style="left:796px;top:961px;width:1px;height:8px;background:#5a5a60;box-shadow:2px 0 0 #5a5a60,4px 0 0 #5a5a60,6px 0 0 #5a5a60"></div>
<div class="a" style="left:1636px;top:956px;width:17px;height:17px;background:#eef0f4"></div>
<div class="a" style="left:1653px;top:95px;width:26px;height:905px;background:#d6deee"></div>
<div class="a" style="left:1654px;top:97px;width:25px;height:602px;background:linear-gradient(90deg,#f4f6fb,#e4e9f4);border-left:1px solid #fff;border-bottom:1px solid #aeb9cc"></div>
<div class="a" style="left:1658px;top:102px;width:20px;height:0;border-top:2px dotted #a9b3c5"></div>
<svg class="ic" style="left:1658px;top:110.5px;width:18px;height:18px" viewBox="0 0 16 16"><rect x="3" y="2" width="5" height="12" fill="#a8c8f0"/><rect x="8" y="6" width="7" height="4" fill="#a8c8f0"/><path d="M3 1v14M8 1v14M8 6h7M8 10h7" stroke="#000" stroke-width="1.300" fill="none"/><circle cx="6" cy="8" r="2.300" fill="#20d020"/></svg>
<svg class="ic" style="left:1658px;top:133px;width:18px;height:18px" viewBox="0 0 16 16"><path d="M1 9l2-2 2 2 2-2 1 2-1 2 1 2-2 1-1-2-2 2-2-2 1-2z" fill="#2a68d0" stroke="#1848a0" stroke-width=".5"/><path d="M4 4l2-2 2 1v2l-2 1z" fill="#2a68d0"/><path d="M10 7l2.500-5 2.500 5z" fill="#28c838" stroke="#0c8c1c" stroke-width=".5"/><circle cx="12.500" cy="2" r="1.200" fill="#28c838"/><circle cx="4.500" cy="10.500" r="1.300" fill="#e8f0fc"/></svg>
<svg class="ic" style="left:1658px;top:154.5px;width:18px;height:18px" viewBox="0 0 16 16"><path d="M3 5c0-2 3-2 3.500 0l1 1h1l1-1c.5-2 3.500-2 3.500 0l1.500 6c0 3-4.500 3-5 0v-2h-3v2c-.5 3-5 3-5 0z" fill="#4a4a4a" stroke="#222" stroke-width=".6"/><circle cx="4.200" cy="11" r="1.600" fill="#9a9a9a"/><circle cx="11.800" cy="11" r="1.600" fill="#9a9a9a"/></svg>
<svg class="ic" style="left:1658px;top:175.5px;width:18px;height:18px" viewBox="0 0 16 16"><path d="M1.500 8l6-5.500v3.500h7v4h-7v3.500z" fill="#1e8a80" stroke="#083c38" stroke-width="1"/></svg>
<svg class="ic" style="left:1658px;top:197.5px;width:18px;height:18px" viewBox="0 0 16 16"><path d="M14.500 8l-6-5.500v3.500h-7v4h7v3.500z" fill="#1e8a80" stroke="#083c38" stroke-width="1"/></svg>
<svg class="ic" style="left:1658px;top:227px;width:18px;height:18px" viewBox="0 0 16 16"><path d="M4 6l5-4h2.500v12h-4v-7l-3.500 2z" fill="#1e8a80" stroke="#083c38" stroke-width=".9"/></svg>
<svg class="ic" style="left:1658px;top:258px;width:18px;height:18px" viewBox="0 0 16 16"><rect x="1" y="1" width="4" height="14" fill="#a8c8f0"/><path d="M7 4l8-3v10l-8 1z" fill="#a8c8f0"/><path d="M5 1v14M7 2v13M7 4l8-3M7 12l8-1" stroke="#000" stroke-width="1.300" fill="none"/><rect x="5" y="3" width="2" height="10" fill="#f4e020"/></svg>
<svg class="ic" style="left:1658px;top:280px;width:18px;height:18px" viewBox="0 0 16 16"><rect x="1" y="4" width="14" height="8" fill="#a8c8f0"/><path d="M2 1.500h10v2.500h-3.500v8h3.500v2.500h-10v-2.500h3.500v-8h-3.500z" fill="#eef0f2" stroke="#000" stroke-width="1.200"/><path d="M1 5.500h4M1 10.500h4M11 5.500h4.500M11 10.500h4.500" stroke="#000" stroke-width="1.100"/><rect x="8.5" y="5" width="2.5" height="6" fill="#f4e428" stroke="#000" stroke-width=".8"/><rect x="2.500" y="5.500" width="3" height="5" fill="#f4e428" stroke="#000" stroke-width=".8"/></svg>
<svg class="ic" style="left:1658px;top:302px;width:18px;height:18px" viewBox="0 0 16 16"><rect x="9" y="3" width="6.500" height="10" fill="#a8c8f0"/><path d="M2 1.500h10v2.500h-3.500v8h3.500v2.500h-10v-2.500h3.500v-8h-3.500z" fill="#eef0f2" stroke="#000" stroke-width="1.200"/><path d="M9 4.500h6.500M9 11.500h6.500" stroke="#000" stroke-width="1.200"/><rect x="8.5" y="5.5" width="3.5" height="5" fill="#f4e428" stroke="#000" stroke-width=".8"/></svg>
<svg class="ic" style="left:1658px;top:324px;width:18px;height:18px" viewBox="0 0 16 16"><rect x="9" y="5" width="6.500" height="8" fill="#a8c8f0"/><path d="M2 1.500h10v2.500h-3.500v8h3.500v2.500h-10v-2.500h3.500v-8h-3.500z" fill="#eef0f2" stroke="#000" stroke-width="1.200"/><rect x="8.5" y="6" width="2.5" height="4.5" fill="#f4e428" stroke="#000" stroke-width=".8"/></svg>
<svg class="ic" style="left:1658px;top:346px;width:18px;height:18px" viewBox="0 0 16 16"><path d="M3 1v14M6 1v9l7 3M6 14h9M9 15l6-6" stroke="#000" stroke-width="1.300" fill="none"/><path d="M6 10l5 1-4 2z" fill="#f4e020"/></svg>
<svg class="ic" style="left:1658px;top:368px;width:18px;height:18px" viewBox="0 0 16 16"><rect x="9" y="3" width="6.500" height="10" fill="#a8c8f0"/><path d="M2 1.500h10v2.500h-3.500v8h3.500v2.500h-10v-2.500h3.500v-8h-3.500z" fill="#eef0f2" stroke="#000" stroke-width="1.200"/><path d="M9 4.500h6.500M9 11.500h6.500" stroke="#000" stroke-width="1.200"/><rect x="9" y="5" width="5.5" height="5.5" fill="#f4e428" stroke="#000" stroke-width=".8"/></svg>
<svg class="ic" style="left:1658px;top:390px;width:18px;height:18px" viewBox="0 0 16 16"><rect x="1" y="4" width="14" height="8" fill="#a8c8f0"/><path d="M2 1.500h10v2.500h-3.500v8h3.500v2.500h-10v-2.500h3.500v-8h-3.500z" fill="#eef0f2" stroke="#000" stroke-width="1.200"/><path d="M1 5.500h4M1 10.500h4M11 5.500h4.500M11 10.500h4.500" stroke="#000" stroke-width="1.100"/><rect x="8.5" y="5" width="2.5" height="6" fill="#f4e428" stroke="#000" stroke-width=".8"/><rect x="2.500" y="5.500" width="3" height="5" fill="#f4e428" stroke="#000" stroke-width=".8"/></svg>
<svg class="ic" style="left:1658px;top:412px;width:18px;height:18px" viewBox="0 0 16 16"><rect x="9" y="3" width="6.500" height="10" fill="#a8c8f0"/><path d="M2 1.500h10v2.500h-3.500v8h3.500v2.500h-10v-2.500h3.500v-8h-3.500z" fill="#eef0f2" stroke="#000" stroke-width="1.200"/><path d="M9 4.500h6.500M9 11.500h6.500" stroke="#000" stroke-width="1.200"/><rect x="8.5" y="4.5" width="5" height="4.5" fill="#f4e428" stroke="#000" stroke-width=".8"/></svg>
<svg class="ic" style="left:1658px;top:434px;width:18px;height:18px" viewBox="0 0 16 16"><rect x="9" y="5" width="6.500" height="8" fill="#a8c8f0"/><path d="M2 1.500h10v2.500h-3.500v8h3.500v2.500h-10v-2.500h3.500v-8h-3.500z" fill="#eef0f2" stroke="#000" stroke-width="1.200"/><path d="M9 4.500h6.500M9 11.500h6.500" stroke="#000" stroke-width="1.200"/><rect x="8.5" y="5" width="3" height="6" fill="#f4e428" stroke="#000" stroke-width=".8"/></svg>
<svg class="ic" style="left:1658px;top:456px;width:18px;height:18px" viewBox="0 0 16 16"><rect x="9" y="3" width="6.500" height="10" fill="#a8c8f0"/><path d="M2 1.500h10v2.500h-3.500v8h3.500v2.500h-10v-2.500h3.500v-8h-3.500z" fill="#eef0f2" stroke="#000" stroke-width="1.200"/><path d="M9 4.500h6.500M9 11.500h6.500" stroke="#000" stroke-width="1.200"/><rect x="8.5" y="4.5" width="5" height="4.5" fill="#f4e428" stroke="#000" stroke-width=".8"/></svg>
<svg class="ic" style="left:1658px;top:478px;width:18px;height:18px" viewBox="0 0 16 16"><rect x="9" y="5" width="6.500" height="8" fill="#a8c8f0"/><path d="M2 1.500h10v2.500h-3.500v8h3.500v2.500h-10v-2.500h3.500v-8h-3.500z" fill="#eef0f2" stroke="#000" stroke-width="1.200"/><rect x="8.5" y="6" width="2.5" height="4.5" fill="#f4e428" stroke="#000" stroke-width=".8"/></svg>
<svg class="ic" style="left:1658px;top:500px;width:18px;height:18px" viewBox="0 0 16 16"><rect x="9" y="3" width="6.500" height="10" fill="#a8c8f0"/><path d="M2 1.500h10v2.500h-3.500v8h3.500v2.500h-10v-2.500h3.500v-8h-3.500z" fill="#eef0f2" stroke="#000" stroke-width="1.200"/><path d="M9 4.500h6.500M9 11.500h6.500" stroke="#000" stroke-width="1.200"/><rect x="9" y="5" width="5.5" height="5.5" fill="#f4e428" stroke="#000" stroke-width=".8"/></svg>
<svg class="ic" style="left:1658px;top:522px;width:18px;height:18px" viewBox="0 0 16 16"><rect x="9" y="3" width="6.500" height="10" fill="#a8c8f0"/><path d="M2 1.500h10v2.500h-3.500v8h3.500v2.500h-10v-2.500h3.500v-8h-3.500z" fill="#eef0f2" stroke="#000" stroke-width="1.200"/><path d="M9 4.500h6.500M9 11.500h6.500" stroke="#000" stroke-width="1.200"/><rect x="8.5" y="5.5" width="3.5" height="5" fill="#f4e428" stroke="#000" stroke-width=".8"/></svg>
<svg class="ic" style="left:1658px;top:544px;width:18px;height:18px" viewBox="0 0 16 16"><rect x="9" y="5" width="6.500" height="8" fill="#a8c8f0"/><path d="M2 1.500h10v2.500h-3.500v8h3.500v2.500h-10v-2.500h3.500v-8h-3.500z" fill="#eef0f2" stroke="#000" stroke-width="1.200"/><path d="M9 4.500h6.500M9 11.500h6.500" stroke="#000" stroke-width="1.200"/><rect x="8.5" y="5" width="3" height="6" fill="#f4e428" stroke="#000" stroke-width=".8"/></svg>
<svg class="ic" style="left:1658px;top:566px;width:18px;height:18px" viewBox="0 0 16 16"><rect x="9" y="3" width="6.500" height="10" fill="#a8c8f0"/><path d="M2 1.500h10v2.500h-3.500v8h3.500v2.500h-10v-2.500h3.500v-8h-3.500z" fill="#eef0f2" stroke="#000" stroke-width="1.200"/><path d="M9 4.500h6.500M9 11.500h6.500" stroke="#000" stroke-width="1.200"/><rect x="9" y="5" width="5.5" height="5.5" fill="#f4e428" stroke="#000" stroke-width=".8"/></svg>
<svg class="ic" style="left:1658px;top:588px;width:18px;height:18px" viewBox="0 0 16 16"><rect x="1" y="4" width="14" height="8" fill="#a8c8f0"/><path d="M2 1.500h10v2.500h-3.500v8h3.500v2.500h-10v-2.500h3.500v-8h-3.500z" fill="#eef0f2" stroke="#000" stroke-width="1.200"/><path d="M1 5.500h4M1 10.500h4M11 5.500h4.500M11 10.500h4.500" stroke="#000" stroke-width="1.100"/><rect x="8.5" y="5" width="2.5" height="6" fill="#f4e428" stroke="#000" stroke-width=".8"/><rect x="2.500" y="5.500" width="3" height="5" fill="#f4e428" stroke="#000" stroke-width=".8"/></svg>
<svg class="ic" style="left:1658px;top:610px;width:18px;height:18px" viewBox="0 0 16 16"><rect x="9" y="3" width="6.500" height="10" fill="#a8c8f0"/><path d="M2 1.500h10v2.500h-3.500v8h3.500v2.500h-10v-2.500h3.500v-8h-3.500z" fill="#eef0f2" stroke="#000" stroke-width="1.200"/><path d="M9 4.500h6.500M9 11.500h6.500" stroke="#000" stroke-width="1.200"/><rect x="8.5" y="5.5" width="3.5" height="5" fill="#f4e428" stroke="#000" stroke-width=".8"/></svg>
<svg class="ic" style="left:1658px;top:632px;width:18px;height:18px" viewBox="0 0 16 16"><rect x="9" y="3" width="6.500" height="10" fill="#a8c8f0"/><path d="M2 1.500h10v2.500h-3.500v8h3.500v2.500h-10v-2.500h3.500v-8h-3.500z" fill="#eef0f2" stroke="#000" stroke-width="1.200"/><path d="M9 4.500h6.500M9 11.500h6.500" stroke="#000" stroke-width="1.200"/><rect x="8.5" y="4.5" width="5" height="4.5" fill="#f4e428" stroke="#000" stroke-width=".8"/></svg>
<svg class="ic" style="left:1658px;top:654px;width:18px;height:18px" viewBox="0 0 16 16"><rect x="9" y="5" width="6.500" height="8" fill="#a8c8f0"/><path d="M2 1.500h10v2.500h-3.500v8h3.500v2.500h-10v-2.500h3.500v-8h-3.500z" fill="#eef0f2" stroke="#000" stroke-width="1.200"/><path d="M9 4.500h6.500M9 11.500h6.500" stroke="#000" stroke-width="1.200"/><rect x="8.5" y="5" width="3" height="6" fill="#f4e428" stroke="#000" stroke-width=".8"/></svg>
<svg class="ic" style="left:1658px;top:676px;width:18px;height:18px" viewBox="0 0 16 16"><path d="M3 1v14M6 1v9l7 3M6 14h9M9 15l6-6" stroke="#000" stroke-width="1.300" fill="none"/><path d="M6 10l5 1-4 2z" fill="#f4e020"/></svg>
<div class="a" style="left:1658px;top:221px;width:19px;height:1px;background:#8d97a8;box-shadow:0 1px 0 #fff"></div>
<div class="a" style="left:1658px;top:251px;width:19px;height:1px;background:#8d97a8;box-shadow:0 1px 0 #fff"></div>
<div class="a" style="left:0;top:973px;width:1679px;height:28px;background:#dfe5f1"></div>
<div class="tb" style="left:0;top:974px;width:727px;height:25px"><div class="grip" style="left:3px"></div></div>
<div class="tb" style="left:729px;top:974px;width:685px;height:25px"><div class="grip" style="left:3px"></div></div>
<div class="a" style="left:8.5px;top:977px;width:22px;height:20px;box-sizing:border-box;border:1px solid #6e6e70;border-radius:3px;background:linear-gradient(#d4d4d6,#e6e6e8 40%,#f2f2f3);box-shadow:inset 0 1px 2px rgba(0,0,0,.25)"></div>
<svg class="ic" style="left:11px;top:978.5px;width:17px;height:17px" viewBox="0 0 16 16"><rect x="1" y="1" width="14" height="14" rx="1.500" fill="none" stroke="#1c2c5c" stroke-width=".95" stroke-dasharray="2.200 1.600"/><path d="M5 2.500l7 7h-3l2 4-1.500 1-2-4-2.500 2z" fill="#2a68d0" stroke="#103890" stroke-width=".6"/></svg>
<div class="a" style="left:31.5px;top:977px;width:22px;height:20px;box-sizing:border-box;border:1px solid #6e6e70;border-radius:3px;background:linear-gradient(#d4d4d6,#e6e6e8 40%,#f2f2f3);box-shadow:inset 0 1px 2px rgba(0,0,0,.25)"></div>
<svg class="ic" style="left:34px;top:978.5px;width:17px;height:17px" viewBox="0 0 16 16"><rect x="1" y="1" width="14" height="14" rx="1.500" fill="none" stroke="#1c2c5c" stroke-width=".95" stroke-dasharray="2.200 1.600"/><path d="M5 13l2-5h2l2 5z" fill="#28c838" stroke="#0c8c1c" stroke-width=".5"/><circle cx="8" cy="5.500" r="1.800" fill="#28c838"/></svg>
<div class="a" style="left:54.5px;top:977px;width:22px;height:20px;box-sizing:border-box;border:1px solid #6e6e70;border-radius:3px;background:linear-gradient(#d4d4d6,#e6e6e8 40%,#f2f2f3);box-shadow:inset 0 1px 2px rgba(0,0,0,.25)"></div>
<svg class="ic" style="left:57px;top:978.5px;width:17px;height:17px" viewBox="0 0 16 16"><rect x="1" y="1" width="14" height="14" rx="1.500" fill="none" stroke="#1c2c5c" stroke-width=".95" stroke-dasharray="2.200 1.600"/><rect x="5.500" y="4.500" width="5.500" height="7" fill="#a8c0f0" stroke="#c8d4f0" stroke-width="1"/></svg>
<div class="a" style="left:77.5px;top:977px;width:22px;height:20px;box-sizing:border-box;border:1px solid #6e6e70;border-radius:3px;background:linear-gradient(#d4d4d6,#e6e6e8 40%,#f2f2f3);box-shadow:inset 0 1px 2px rgba(0,0,0,.25)"></div>
<svg class="ic" style="left:80px;top:978.5px;width:17px;height:17px" viewBox="0 0 16 16"><rect x="1" y="1" width="14" height="14" rx="1.500" fill="none" stroke="#1c2c5c" stroke-width=".95" stroke-dasharray="2.200 1.600"/><rect x="4" y="4" width="8.500" height="8.500" fill="url(#gOr)" stroke="#b8b8b8" stroke-width="1.200"/></svg>
<div class="a" style="left:100.5px;top:977px;width:22px;height:20px;box-sizing:border-box;border:1px solid #6e6e70;border-radius:3px;background:linear-gradient(#d4d4d6,#e6e6e8 40%,#f2f2f3);box-shadow:inset 0 1px 2px rgba(0,0,0,.25)"></div>
<svg class="ic" style="left:103px;top:978.5px;width:17px;height:17px" viewBox="0 0 16 16"><rect x="1" y="1" width="14" height="14" rx="1.500" fill="none" stroke="#1c2c5c" stroke-width=".95" stroke-dasharray="2.200 1.600"/><g fill="#fff" stroke="#e01830" stroke-width="1.200"><rect x="4" y="4" width="2.500" height="2.500"/><rect x="9.500" y="4" width="2.500" height="2.500"/><rect x="4" y="9.500" width="2.500" height="2.500"/><rect x="9.500" y="9.500" width="2.500" height="2.500"/></g></svg>
<div class="a" style="left:123.5px;top:977px;width:22px;height:20px;box-sizing:border-box;border:1px solid #6e6e70;border-radius:3px;background:linear-gradient(#d4d4d6,#e6e6e8 40%,#f2f2f3);box-shadow:inset 0 1px 2px rgba(0,0,0,.25)"></div>
<svg class="ic" style="left:126px;top:978.5px;width:17px;height:17px" viewBox="0 0 16 16"><rect x="1" y="1" width="14" height="14" rx="1.500" fill="none" stroke="#1c2c5c" stroke-width=".95" stroke-dasharray="2.200 1.600"/><path d="M3 6h10M3 10h10M6 13l2-10M10 13l2-10" stroke="#2a68d0" stroke-width="1.300" fill="none"/></svg>
<svg class="ic" style="left:149px;top:978.5px;width:17px;height:17px" viewBox="0 0 16 16"><rect x="1" y="1" width="14" height="14" rx="1.500" fill="none" stroke="#1c2c5c" stroke-width=".95" stroke-dasharray="2.200 1.600"/><path d="M3 6h10M3 10h10M6 13l2-10" stroke="#2a68d0" stroke-width="1.300" fill="none"/><path d="M9 14l4-12" stroke="#e02818" stroke-width="1.500"/></svg>
<div class="a" style="left:169.5px;top:977px;width:22px;height:20px;box-sizing:border-box;border:1px solid #6e6e70;border-radius:3px;background:linear-gradient(#d4d4d6,#e6e6e8 40%,#f2f2f3);box-shadow:inset 0 1px 2px rgba(0,0,0,.25)"></div>
<svg class="ic" style="left:172px;top:978.5px;width:17px;height:17px" viewBox="0 0 16 16"><rect x="1" y="1" width="14" height="14" rx="1.500" fill="none" stroke="#1c2c5c" stroke-width=".95" stroke-dasharray="2.200 1.600"/><path d="M6.500 2h3v7l-1.500 4-1.500-4z" fill="#c89828" stroke="#8a6410" stroke-width=".5"/><path d="M4 14c0-2 2-3 4-3s4 1 4 3" fill="#f8f0e0"/></svg>
<div class="a" style="left:192.5px;top:977px;width:22px;height:20px;box-sizing:border-box;border:1px solid #6e6e70;border-radius:3px;background:linear-gradient(#d4d4d6,#e6e6e8 40%,#f2f2f3);box-shadow:inset 0 1px 2px rgba(0,0,0,.25)"></div>
<svg class="ic" style="left:195px;top:978.5px;width:17px;height:17px" viewBox="0 0 16 16"><rect x="1" y="1" width="14" height="14" rx="1.500" fill="none" stroke="#1c2c5c" stroke-width=".95" stroke-dasharray="2.200 1.600"/><path d="M3 14L11 3M6 14l6-7" stroke="#c86818" stroke-width="1.100"/><path d="M9 2c2-1 3 1 2 2.500M12 3c2 0 2 2 .5 3" fill="none" stroke="#e03020" stroke-width="1"/></svg>
<div class="a" style="left:215.5px;top:977px;width:22px;height:20px;box-sizing:border-box;border:1px solid #6e6e70;border-radius:3px;background:linear-gradient(#d4d4d6,#e6e6e8 40%,#f2f2f3);box-shadow:inset 0 1px 2px rgba(0,0,0,.25)"></div>
<svg class="ic" style="left:218px;top:978.5px;width:17px;height:17px" viewBox="0 0 16 16"><rect x="1" y="1" width="14" height="14" rx="1.500" fill="none" stroke="#1c2c5c" stroke-width=".95" stroke-dasharray="2.200 1.600"/><rect x="3.500" y="4.500" width="9" height="7.500" rx="1" fill="#eaf2fd" stroke="#2a5cb8" stroke-width="1.200"/></svg>
<div class="a" style="left:238.5px;top:977px;width:22px;height:20px;box-sizing:border-box;border:1px solid #6e6e70;border-radius:3px;background:linear-gradient(#d4d4d6,#e6e6e8 40%,#f2f2f3);box-shadow:inset 0 1px 2px rgba(0,0,0,.25)"></div>
<svg class="ic" style="left:241px;top:978.5px;width:17px;height:17px" viewBox="0 0 16 16"><rect x="1" y="1" width="14" height="14" rx="1.500" fill="none" stroke="#1c2c5c" stroke-width=".95" stroke-dasharray="2.200 1.600"/><g fill="#8a2808"><rect x="3" y="3" width="3" height="3"/><rect x="3" y="10" width="3" height="3"/><rect x="9" y="3" width="3" height="3"/><rect x="9" y="10" width="3" height="3"/><rect x="6" y="6.500" width="3" height="3"/><rect x="12" y="6.500" width="2" height="3"/></g></svg>
<svg class="ic" style="left:264px;top:978.5px;width:17px;height:17px" viewBox="0 0 16 16"><rect x="1" y="1" width="14" height="14" rx="1.500" fill="none" stroke="#1c2c5c" stroke-width=".95" stroke-dasharray="2.200 1.600"/><rect x="4" y="4.500" width="4" height="7" fill="#a84808" stroke="#5a2000" stroke-width=".6"/><rect x="8" y="6.500" width="5" height="3" fill="#d87818" stroke="#5a2000" stroke-width=".6"/></svg>
<div class="a" style="left:284.5px;top:977px;width:22px;height:20px;box-sizing:border-box;border:1px solid #6e6e70;border-radius:3px;background:linear-gradient(#d4d4d6,#e6e6e8 40%,#f2f2f3);box-shadow:inset 0 1px 2px rgba(0,0,0,.25)"></div>
<svg class="ic" style="left:287px;top:978.5px;width:17px;height:17px" viewBox="0 0 16 16"><rect x="1" y="1" width="14" height="14" rx="1.500" fill="none" stroke="#1c2c5c" stroke-width=".95" stroke-dasharray="2.200 1.600"/><path d="M4 5v3c0 2 1 3 3 3h2c2 0 3-1 3-3v-3" fill="none" stroke="#a04808" stroke-width="2"/></svg>
<div class="a" style="left:307.5px;top:977px;width:22px;height:20px;box-sizing:border-box;border:1px solid #6e6e70;border-radius:3px;background:linear-gradient(#d4d4d6,#e6e6e8 40%,#f2f2f3);box-shadow:inset 0 1px 2px rgba(0,0,0,.25)"></div>
<svg class="ic" style="left:310px;top:978.5px;width:17px;height:17px" viewBox="0 0 16 16"><rect x="1" y="1" width="14" height="14" rx="1.500" fill="none" stroke="#1c2c5c" stroke-width=".95" stroke-dasharray="2.200 1.600"/><path d="M2 9l6-3 6 3-6 3.500z" fill="#e8e060" stroke="#3878c0" stroke-width="1"/><path d="M2 11l6 3.500 6-3.500" fill="none" stroke="#888" stroke-width="1"/></svg>
<div class="a" style="left:330.5px;top:977px;width:22px;height:20px;box-sizing:border-box;border:1px solid #6e6e70;border-radius:3px;background:linear-gradient(#d4d4d6,#e6e6e8 40%,#f2f2f3);box-shadow:inset 0 1px 2px rgba(0,0,0,.25)"></div>
<svg class="ic" style="left:333px;top:978.5px;width:17px;height:17px" viewBox="0 0 16 16"><rect x="1" y="1" width="14" height="14" rx="1.500" fill="none" stroke="#1c2c5c" stroke-width=".95" stroke-dasharray="2.200 1.600"/><path d="M8 2l5 4-2 1.500-2-1.500-4 4 2 3-2 2-4-5.500z" fill="#f0a030" stroke="#c87810" stroke-width=".5"/></svg>
<svg class="ic" style="left:362px;top:978.5px;width:17px;height:17px" viewBox="0 0 16 16"><rect x="1" y="1" width="14" height="14" rx="1.500" fill="none" stroke="#1c2c5c" stroke-width=".95" stroke-dasharray="2.200 1.600"/><path d="M4 8l1.500-4 1.500 4z" fill="#28c838"/><circle cx="5.500" cy="3.500" r="1" fill="#28c838"/><path d="M10 5v8M8 11l2 2.500 2-2.500" fill="none" stroke="#223" stroke-width="1.200"/></svg>
<div class="a" style="left:382.5px;top:977px;width:22px;height:20px;box-sizing:border-box;border:1px solid #6e6e70;border-radius:3px;background:linear-gradient(#d4d4d6,#e6e6e8 40%,#f2f2f3);box-shadow:inset 0 1px 2px rgba(0,0,0,.25)"></div>
<svg class="ic" style="left:385px;top:978.5px;width:17px;height:17px" viewBox="0 0 16 16"><rect x="1" y="1" width="14" height="14" rx="1.500" fill="none" stroke="#1c2c5c" stroke-width=".95" stroke-dasharray="2.200 1.600"/><path d="M4 13l1.500-4 1.500 4z" fill="#28c838"/><circle cx="5.500" cy="8.500" r="1" fill="#28c838"/><path d="M10 11v-8M8 5l2-2.500 2 2.500" fill="none" stroke="#223" stroke-width="1.200"/></svg>
<svg class="ic" style="left:409px;top:978.5px;width:17px;height:17px" viewBox="0 0 16 16"><rect x="1" y="1" width="14" height="14" rx="1.500" fill="none" stroke="#1c2c5c" stroke-width=".95" stroke-dasharray="2.200 1.600"/><g fill="#a8b0f0" stroke="#4848c0" stroke-width=".7"><rect x="2.500" y="2.500" width="2.500" height="2.500"/><rect x="6" y="2.500" width="2.500" height="2.500"/><rect x="2.500" y="6" width="2.500" height="2.500"/><rect x="6" y="6" width="2.500" height="2.500"/></g><path d="M11.500 5v8M9.500 11l2 2.500 2-2.500" fill="none" stroke="#223" stroke-width="1.200"/></svg>
<svg class="ic" style="left:432px;top:978.5px;width:17px;height:17px" viewBox="0 0 16 16"><rect x="1" y="1" width="14" height="14" rx="1.500" fill="none" stroke="#1c2c5c" stroke-width=".95" stroke-dasharray="2.200 1.600"/><g fill="#a8b0f0" stroke="#4848c0" stroke-width=".7"><rect x="2.500" y="7.500" width="2.500" height="2.500"/><rect x="6" y="7.500" width="2.500" height="2.500"/><rect x="2.500" y="11" width="2.500" height="2.500"/><rect x="6" y="11" width="2.500" height="2.500"/></g><path d="M11.500 11v-8M9.500 5l2-2.500 2 2.500" fill="none" stroke="#223" stroke-width="1.200"/></svg>
<svg class="ic" style="left:455px;top:978.5px;width:17px;height:17px" viewBox="0 0 16 16"><rect x="1" y="1" width="14" height="14" rx="1.500" fill="none" stroke="#1c2c5c" stroke-width=".95" stroke-dasharray="2.200 1.600"/><path d="M3 11.500h10" stroke="#28b038" stroke-width="2"/><circle cx="11" cy="6" r="3" fill="#f0f0f0" stroke="#888" stroke-width=".8"/><path d="M11 4v2h-1.500" fill="none" stroke="#444" stroke-width=".8"/></svg>
<svg class="ic" style="left:705px;top:978.5px;width:17px;height:17px" viewBox="0 0 16 16"><rect x="1" y="1" width="14" height="14" rx="1.500" fill="none" stroke="#1c2c5c" stroke-width=".95" stroke-dasharray="2.200 1.600"/><circle cx="7" cy="7.500" r="4.500" fill="#28a838" stroke="#0c6c1c" stroke-width=".6"/><path d="M3 7c2-2 5-2 8 0M4 10c2-1.500 4-1.500 6 0M7 3v9" fill="none" stroke="#c8f0c8" stroke-width=".8"/><path d="M8 11l2 2.500 4-5" fill="none" stroke="#e06020" stroke-width="1.500"/></svg>
<div class="sep" style="left:355px;top:977px;height:19px"></div>
<div class="sep" style="left:478px;top:977px;height:19px"></div>
<div class="cmb" style="left:484px;top:976px;width:218px;height:21px;line-height:22px">standard</div>
<div class="a" style="left:737.5px;top:977px;width:22px;height:20px;box-sizing:border-box;border:1px solid #6e6e70;border-radius:3px;background:linear-gradient(#d4d4d6,#e6e6e8 40%,#f2f2f3);box-shadow:inset 0 1px 2px rgba(0,0,0,.25)"></div>
<svg class="ic" style="left:740.5px;top:979px;width:16px;height:16px" viewBox="0 0 16 16"><rect x="2" y="2" width="12" height="12" fill="#f8a030" stroke="#e87010" stroke-width="1.200"/><path d="M4 4l8 8M12 4l-8 8" stroke="#fff" stroke-width="1.800"/></svg>
<div class="a" style="left:760.5px;top:977px;width:22px;height:20px;box-sizing:border-box;border:1px solid #6e6e70;border-radius:3px;background:linear-gradient(#d4d4d6,#e6e6e8 40%,#f2f2f3);box-shadow:inset 0 1px 2px rgba(0,0,0,.25)"></div>
<svg class="ic" style="left:763.5px;top:979px;width:16px;height:16px" viewBox="0 0 16 16"><rect x="3.500" y="3.500" width="9" height="9" fill="#fde8c8" stroke="#f08820" stroke-width="2.200"/></svg>
<div class="a" style="left:783.5px;top:977px;width:22px;height:20px;box-sizing:border-box;border:1px solid #6e6e70;border-radius:3px;background:linear-gradient(#d4d4d6,#e6e6e8 40%,#f2f2f3);box-shadow:inset 0 1px 2px rgba(0,0,0,.25)"></div>
<svg class="ic" style="left:786.5px;top:979px;width:16px;height:16px" viewBox="0 0 16 16"><circle cx="8" cy="8" r="5" fill="none" stroke="#f0a040" stroke-width="1.600"/></svg>
<div class="a" style="left:806.5px;top:977px;width:22px;height:20px;box-sizing:border-box;border:1px solid #6e6e70;border-radius:3px;background:linear-gradient(#d4d4d6,#e6e6e8 40%,#f2f2f3);box-shadow:inset 0 1px 2px rgba(0,0,0,.25)"></div>
<svg class="ic" style="left:809.5px;top:979px;width:16px;height:16px" viewBox="0 0 16 16"><path d="M8 3l5.500 10h-11z" fill="none" stroke="#f0a040" stroke-width="1.500"/></svg>
<div class="a" style="left:829.5px;top:977px;width:22px;height:20px;box-sizing:border-box;border:1px solid #6e6e70;border-radius:3px;background:linear-gradient(#d4d4d6,#e6e6e8 40%,#f2f2f3);box-shadow:inset 0 1px 2px rgba(0,0,0,.25)"></div>
<svg class="ic" style="left:832.5px;top:979px;width:16px;height:16px" viewBox="0 0 16 16"><path d="M3 3l10 10M13 3l-10 10" stroke="#f0a040" stroke-width="2"/></svg>
<div class="a" style="left:852.5px;top:977px;width:22px;height:20px;box-sizing:border-box;border:1px solid #6e6e70;border-radius:3px;background:linear-gradient(#d4d4d6,#e6e6e8 40%,#f2f2f3);box-shadow:inset 0 1px 2px rgba(0,0,0,.25)"></div>
<svg class="ic" style="left:855.5px;top:979px;width:16px;height:16px" viewBox="0 0 16 16"><path d="M2 13.500h12v-10h-3.500v4h-4v3h-4.500z" fill="#f0a040"/><rect x="8" y="7" width="2.500" height="2.500" fill="#fde8c8"/></svg>
<div class="a" style="left:875.5px;top:977px;width:22px;height:20px;box-sizing:border-box;border:1px solid #6e6e70;border-radius:3px;background:linear-gradient(#d4d4d6,#e6e6e8 40%,#f2f2f3);box-shadow:inset 0 1px 2px rgba(0,0,0,.25)"></div>
<svg class="ic" style="left:878.5px;top:979px;width:16px;height:16px" viewBox="0 0 16 16"><path d="M4 3h9l-9 10h9z" fill="none" stroke="#f0a040" stroke-width="1.400"/><path d="M1 8h12" stroke="#f0a040" stroke-width="1.200" stroke-dasharray="2 1"/></svg>
<div class="a" style="left:898.5px;top:977px;width:22px;height:20px;box-sizing:border-box;border:1px solid #6e6e70;border-radius:3px;background:linear-gradient(#d4d4d6,#e6e6e8 40%,#f2f2f3);box-shadow:inset 0 1px 2px rgba(0,0,0,.25)"></div>
<svg class="ic" style="left:901.5px;top:979px;width:16px;height:16px" viewBox="0 0 16 16"><path d="M2 10l3 3 5-7h4" fill="none" stroke="#e8a030" stroke-width="2.600"/></svg>
<div class="a" style="left:929px;top:977px;width:22px;height:20px;box-sizing:border-box;border:1px solid #6e6e70;border-radius:3px;background:linear-gradient(#d4d4d6,#e6e6e8 40%,#f2f2f3);box-shadow:inset 0 1px 2px rgba(0,0,0,.25)"></div>
<svg class="ic" style="left:932px;top:979px;width:16px;height:16px" viewBox="0 0 16 16"><path d="M4 2.500h8l-8 11h8z" fill="#fde0c0" stroke="#f08840" stroke-width="1.300"/></svg>
<svg class="ic" style="left:955px;top:979px;width:16px;height:16px" viewBox="0 0 16 16"><path d="M2 14L12 4M6 3h7v7" fill="none" stroke="#e8a838" stroke-width="2.600"/></svg>
<div class="a" style="left:983px;top:977px;width:22px;height:20px;box-sizing:border-box;border:1px solid #6e6e70;border-radius:3px;background:linear-gradient(#d4d4d6,#e6e6e8 40%,#f2f2f3);box-shadow:inset 0 1px 2px rgba(0,0,0,.25)"></div>
<svg class="ic" style="left:986px;top:979px;width:16px;height:16px" viewBox="0 0 16 16"><rect x="2" y="2" width="12" height="12" fill="#4868b8" stroke="#555" stroke-width=".8"/><rect x="5" y="4" width="7" height="7" fill="#e87828"/></svg>
<div class="a" style="left:1006px;top:977px;width:22px;height:20px;box-sizing:border-box;border:1px solid #6e6e70;border-radius:3px;background:linear-gradient(#d4d4d6,#e6e6e8 40%,#f2f2f3);box-shadow:inset 0 1px 2px rgba(0,0,0,.25)"></div>
<svg class="ic" style="left:1009px;top:979px;width:16px;height:16px" viewBox="0 0 16 16"><rect x="2.500" y="2.500" width="11" height="11" fill="#4878c8"/><path d="M3 13l10-10v10z" fill="#88a8e0"/><g fill="#fff" stroke="#c84010" stroke-width="1"><rect x="1.500" y="1.500" width="3" height="3"/><rect x="11.500" y="1.500" width="3" height="3"/><rect x="1.500" y="11.500" width="3" height="3"/><rect x="11.500" y="11.500" width="3" height="3"/><rect x="6.500" y="1.500" width="3" height="3"/></g></svg>
<div class="sep" style="left:923px;top:977px;height:19px"></div>
<div class="sep" style="left:977px;top:977px;height:19px"></div>
<div class="sep" style="left:1031px;top:977px;height:19px"></div>
<div class="cmb" style="left:1037px;top:976px;width:83px;height:21px;line-height:22px">Авто</div>
<div class="cmb" style="left:1121px;top:976px;width:130px;height:21px;line-height:22px">Плоскость вида</div>
<div class="cmb" style="left:1253px;top:976px;width:160px;height:21px;line-height:22px">Плоскости контура</div>
<div class="a" style="left:0;top:1000px;width:1679px;height:22px;background:#f0f0f0;border-top:1px solid #fff"></div>
<div class="a" style="left:0;top:999px;width:1679px;height:1px;background:#a0a0a0"></div>
<div class="a" style="left:1130px;top:1003px;width:1px;height:16px;background:#d0d0d0;box-shadow:1px 0 0 #fff"></div>
<div class="a" style="left:1227px;top:1003px;width:1px;height:16px;background:#d0d0d0;box-shadow:1px 0 0 #fff"></div>
<div class="a" style="left:1279px;top:1003px;width:1px;height:16px;background:#d0d0d0;box-shadow:1px 0 0 #fff"></div>
<div class="a" style="left:1500px;top:1003px;width:1px;height:16px;background:#d0d0d0;box-shadow:1px 0 0 #fff"></div>
<span class="t" style="left:1191px;top:1005px;">0</span>
<div class="a" style="left:1231px;top:1005px;width:47px;height:14px;overflow:hidden;white-space:nowrap">Панорама</div>
<span class="t" style="left:1283px;top:1005px;letter-spacing:-0.22px;">Текущая стадия: 1</span>
<span class="t" style="left:1510px;top:1005px;letter-spacing:-0.03px;">1 + 0 выбрано объектов:</span>
<div class="a" style="left:0;top:1020px;width:1679px;height:2px;background:linear-gradient(#55585e,#2a2d33)"></div>
<div class="a" style="left:12px;top:1017px;width:32px;height:12px;border-radius:50%;background:#a9bbd4;border:1px solid #4a566e"></div>
<div class="a" style="left:106px;top:1021px;width:41px;height:1px;background:#e8ebf0"></div><div class="a" style="left:612px;top:1021px;width:40px;height:1px;background:#e8ebf0"></div><div class="a" style="left:657px;top:1021px;width:40px;height:1px;background:#e8ebf0"></div>
</body></html>
